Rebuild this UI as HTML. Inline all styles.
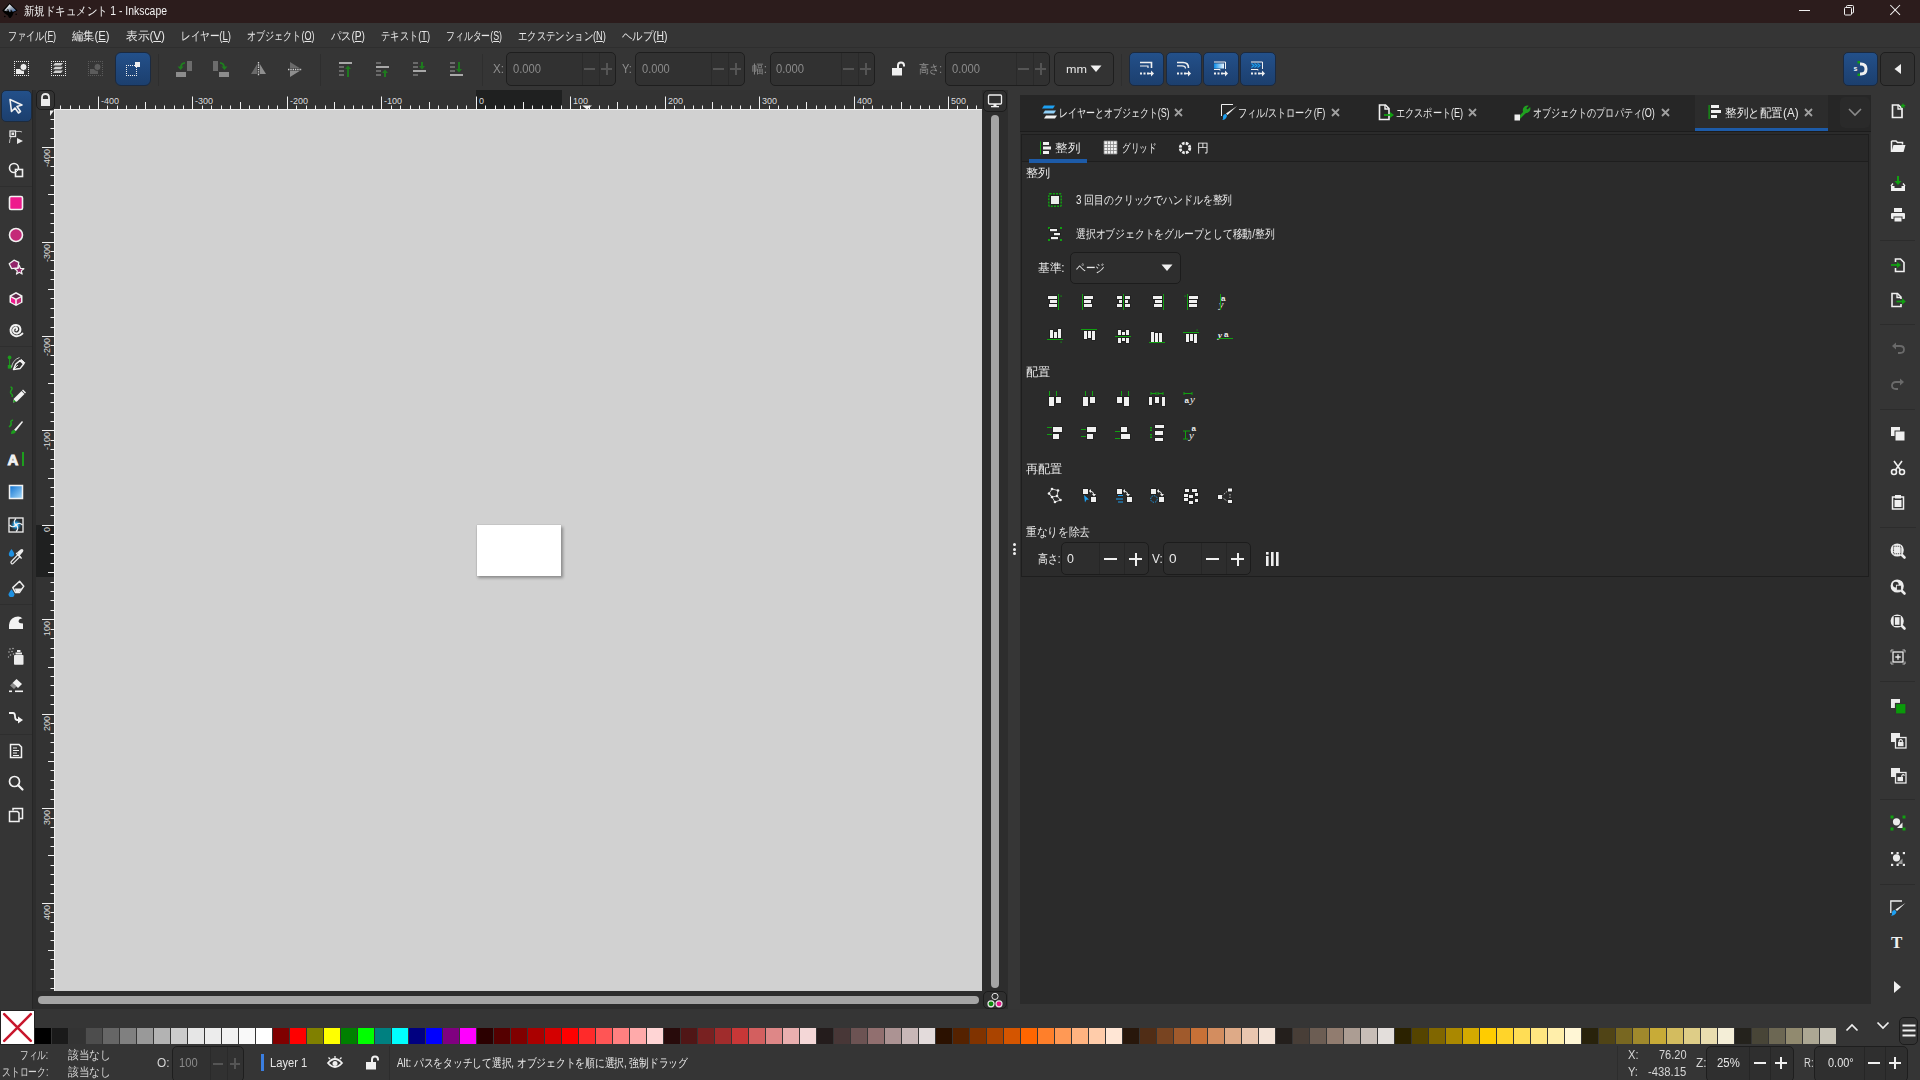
<!DOCTYPE html>
<html><head><meta charset="utf-8">
<style>
*{box-sizing:border-box}
html,body{margin:0;padding:0;width:1920px;height:1080px;overflow:hidden;background:#353535;font-family:"Liberation Sans",sans-serif;font-size:12px;color:#e6e6e6}
.a{position:absolute}
.t{position:absolute;white-space:nowrap;line-height:14px;z-index:2}
svg{position:absolute;overflow:visible;z-index:2}
.inp{position:absolute;border:1px solid #1e1e1e;border-radius:5px;background:#313131}
.inp .d{position:absolute;top:0;bottom:0;width:1px;background:#2a2a2a}
.bb{position:absolute;border:1px solid #1b2a40;border-radius:5px;background:linear-gradient(#23508a,#1c3f6e)}
</style></head><body>

<!-- title bar -->
<div class="a" style="left:0;top:0;width:1920px;height:23px;background:#2c1c1c"></div>
<div class="t" style="left:23.5px;top:4px;font-size:12px;color:#f2f2f2;transform:scaleX(1.014);transform-origin:0 0;--tw:143.00">新規ドキュメント 1 - Inkscape</div>

<!-- menubar -->
<div class="a" style="left:0;top:23px;width:1920px;height:24px;background:#353535"></div>
<div class="a" style="left:0;top:47px;width:1920px;height:1px;background:#2e2e2e"></div>

<!-- toolbar -->
<div class="a" style="left:0;top:48px;width:1920px;height:42px;background:#353535"></div>

<!-- title icon -->
<svg style="left:0px;top:0px" width="24" height="23" viewBox="0 0 24 23"><defs><linearGradient id="lg0" x1="0" y1="0" x2="1" y2="1"><stop offset="0.2" stop-color="#ffffff"/><stop offset="0.55" stop-color="#9aa6b8"/><stop offset="1" stop-color="#2d5a9a"/></linearGradient></defs><path d="M2.2 10.6 L9.6 3 L17.6 10.6 L13.5 12.8 L12.5 15.5 L10.5 18 L9 17.8 L7.8 15.5 L4.5 13.2 Z" fill="#000"/><path d="M4.2 10.4 L9.6 4.3 L16.2 10.6 L13 11.8 L11.2 10.8 L9.8 12.2 L8.5 10.2 L7 11.2 Z" fill="url(#lg0)"/><path d="M6 10.5 L8 9 L9 10.5 Z M10 10.5 L11 9.5 L12.5 11 Z" fill="#111"/><circle cx="4.8" cy="16.5" r="0.8" fill="#000"/><circle cx="16.2" cy="14.3" r="0.8" fill="#000"/></svg>
<!-- window controls -->
<div class="a" style="left:1799px;top:10px;width:11px;height:1px;background:#f0f0f0"></div>
<svg style="left:1843px;top:4px" width="12" height="12" viewBox="0 0 12 12"><rect x="1.5" y="3.5" width="7" height="7.5" rx="1" fill="none" stroke="#f0f0f0" stroke-width="1"/><path d="M3.5 3 V2.5 Q3.5 1.5 4.5 1.5 H9.5 Q10.5 1.5 10.5 2.5 V8.5 Q10.5 9 9 9" fill="none" stroke="#f0f0f0" stroke-width="1"/></svg>
<svg style="left:1889px;top:4px" width="12" height="12" viewBox="0 0 12 12"><path d="M1.3 1 L11 10.8 M11 1 L1.3 10.8" stroke="#f0f0f0" stroke-width="1.05"/></svg>
<!-- menu -->
<div class="t" style="left:7.5px;top:29px;color:#e8e8e8;transform:scaleX(0.941);transform-origin:0 0;--tw:48.00">ファイル(<u>F</u>)</div>
<div class="t" style="left:72.0px;top:29px;color:#e8e8e8;transform:scaleX(1.103);transform-origin:0 0;--tw:37.50">編集(<u>E</u>)</div>
<div class="t" style="left:125.5px;top:29px;color:#e8e8e8;transform:scaleX(1.147);transform-origin:0 0;--tw:39.00">表示(<u>V</u>)</div>
<div class="t" style="left:180.5px;top:29px;color:#e8e8e8;transform:scaleX(0.980);transform-origin:0 0;--tw:50.00">レイヤー(<u>L</u>)</div>
<div class="t" style="left:247.0px;top:29px;color:#e8e8e8;transform:scaleX(0.951);transform-origin:0 0;--tw:67.50">オブジェクト(<u>O</u>)</div>
<div class="t" style="left:330.5px;top:29px;color:#e8e8e8;transform:scaleX(1.000);transform-origin:0 0;--tw:34.00">パス(<u>P</u>)</div>
<div class="t" style="left:380.5px;top:29px;color:#e8e8e8;transform:scaleX(0.961);transform-origin:0 0;--tw:49.00">テキスト(<u>T</u>)</div>
<div class="t" style="left:445.5px;top:29px;color:#e8e8e8;transform:scaleX(0.918);transform-origin:0 0;--tw:56.00">フィルター(<u>S</u>)</div>
<div class="t" style="left:517.5px;top:29px;color:#e8e8e8;transform:scaleX(0.989);transform-origin:0 0;--tw:88.00">エクステンション(<u>N</u>)</div>
<div class="t" style="left:622.0px;top:29px;color:#e8e8e8;transform:scaleX(1.034);transform-origin:0 0;--tw:45.50">ヘルプ(<u>H</u>)</div>


<!-- toolbar icons -->
<svg style="left:10px;top:58px" width="100" height="22" viewBox="10 58 100 22"><g fill="#ececec"><rect x="14" y="61" width="1" height="1"/><rect x="14" y="75" width="1" height="1"/><rect x="14" y="61" width="1" height="1"/><rect x="28" y="61" width="1" height="1"/><rect x="16" y="61" width="1" height="1"/><rect x="16" y="75" width="1" height="1"/><rect x="14" y="63" width="1" height="1"/><rect x="28" y="63" width="1" height="1"/><rect x="18" y="61" width="1" height="1"/><rect x="18" y="75" width="1" height="1"/><rect x="14" y="65" width="1" height="1"/><rect x="28" y="65" width="1" height="1"/><rect x="20" y="61" width="1" height="1"/><rect x="20" y="75" width="1" height="1"/><rect x="14" y="67" width="1" height="1"/><rect x="28" y="67" width="1" height="1"/><rect x="22" y="61" width="1" height="1"/><rect x="22" y="75" width="1" height="1"/><rect x="14" y="69" width="1" height="1"/><rect x="28" y="69" width="1" height="1"/><rect x="24" y="61" width="1" height="1"/><rect x="24" y="75" width="1" height="1"/><rect x="14" y="71" width="1" height="1"/><rect x="28" y="71" width="1" height="1"/><rect x="26" y="61" width="1" height="1"/><rect x="26" y="75" width="1" height="1"/><rect x="14" y="73" width="1" height="1"/><rect x="28" y="73" width="1" height="1"/><rect x="28" y="61" width="1" height="1"/><rect x="28" y="75" width="1" height="1"/><rect x="14" y="75" width="1" height="1"/><rect x="28" y="75" width="1" height="1"/></g><rect x="16" y="69" width="8" height="5" fill="#ececec"/><circle cx="23.5" cy="67" r="3.6" fill="#ececec" stroke="#353535" stroke-width="1"/><g fill="#ececec"><rect x="51" y="61" width="1" height="1"/><rect x="51" y="75" width="1" height="1"/><rect x="51" y="61" width="1" height="1"/><rect x="65" y="61" width="1" height="1"/><rect x="53" y="61" width="1" height="1"/><rect x="53" y="75" width="1" height="1"/><rect x="51" y="63" width="1" height="1"/><rect x="65" y="63" width="1" height="1"/><rect x="55" y="61" width="1" height="1"/><rect x="55" y="75" width="1" height="1"/><rect x="51" y="65" width="1" height="1"/><rect x="65" y="65" width="1" height="1"/><rect x="57" y="61" width="1" height="1"/><rect x="57" y="75" width="1" height="1"/><rect x="51" y="67" width="1" height="1"/><rect x="65" y="67" width="1" height="1"/><rect x="59" y="61" width="1" height="1"/><rect x="59" y="75" width="1" height="1"/><rect x="51" y="69" width="1" height="1"/><rect x="65" y="69" width="1" height="1"/><rect x="61" y="61" width="1" height="1"/><rect x="61" y="75" width="1" height="1"/><rect x="51" y="71" width="1" height="1"/><rect x="65" y="71" width="1" height="1"/><rect x="63" y="61" width="1" height="1"/><rect x="63" y="75" width="1" height="1"/><rect x="51" y="73" width="1" height="1"/><rect x="65" y="73" width="1" height="1"/><rect x="65" y="61" width="1" height="1"/><rect x="65" y="75" width="1" height="1"/><rect x="51" y="75" width="1" height="1"/><rect x="65" y="75" width="1" height="1"/></g><path d="M55 63 H63 L61 65.5 H53 Z M55 66.8 H63 L61 69.3 H53 Z M55 70.6 H63 L61 73.1 H53 Z" fill="#cfcfcf"/><g fill="#5a5a5a"><rect x="88" y="61" width="1" height="1"/><rect x="88" y="75" width="1" height="1"/><rect x="88" y="61" width="1" height="1"/><rect x="102" y="61" width="1" height="1"/><rect x="90" y="61" width="1" height="1"/><rect x="90" y="75" width="1" height="1"/><rect x="88" y="63" width="1" height="1"/><rect x="102" y="63" width="1" height="1"/><rect x="92" y="61" width="1" height="1"/><rect x="92" y="75" width="1" height="1"/><rect x="88" y="65" width="1" height="1"/><rect x="102" y="65" width="1" height="1"/><rect x="94" y="61" width="1" height="1"/><rect x="94" y="75" width="1" height="1"/><rect x="88" y="67" width="1" height="1"/><rect x="102" y="67" width="1" height="1"/><rect x="96" y="61" width="1" height="1"/><rect x="96" y="75" width="1" height="1"/><rect x="88" y="69" width="1" height="1"/><rect x="102" y="69" width="1" height="1"/><rect x="98" y="61" width="1" height="1"/><rect x="98" y="75" width="1" height="1"/><rect x="88" y="71" width="1" height="1"/><rect x="102" y="71" width="1" height="1"/><rect x="100" y="61" width="1" height="1"/><rect x="100" y="75" width="1" height="1"/><rect x="88" y="73" width="1" height="1"/><rect x="102" y="73" width="1" height="1"/><rect x="102" y="61" width="1" height="1"/><rect x="102" y="75" width="1" height="1"/><rect x="88" y="75" width="1" height="1"/><rect x="102" y="75" width="1" height="1"/></g><rect x="90" y="69" width="8" height="5" fill="#5c5c5c"/><circle cx="97.5" cy="67" r="3.6" fill="#5c5c5c" stroke="#353535" stroke-width="1"/></svg>
<div class="bb" style="left:115px;top:52px;width:36px;height:34px;border-radius:6px"></div>
<svg style="left:120px;top:58px" width="26" height="22" viewBox="120 58 26 22"><g fill="#f0f0f0"><rect x="126" y="65" width="1" height="1"/><rect x="126" y="75" width="1" height="1"/><rect x="128" y="65" width="1" height="1"/><rect x="128" y="75" width="1" height="1"/><rect x="130" y="65" width="1" height="1"/><rect x="130" y="75" width="1" height="1"/><rect x="132" y="65" width="1" height="1"/><rect x="132" y="75" width="1" height="1"/><rect x="134" y="65" width="1" height="1"/><rect x="134" y="75" width="1" height="1"/><rect x="136" y="75" width="1" height="1"/><rect x="126" y="65" width="1" height="1"/><rect x="136" y="65" width="1" height="1"/><rect x="126" y="67" width="1" height="1"/><rect x="136" y="67" width="1" height="1"/><rect x="126" y="69" width="1" height="1"/><rect x="136" y="69" width="1" height="1"/><rect x="126" y="71" width="1" height="1"/><rect x="136" y="71" width="1" height="1"/><rect x="126" y="73" width="1" height="1"/><rect x="136" y="73" width="1" height="1"/><rect x="126" y="75" width="1" height="1"/><rect x="136" y="75" width="1" height="1"/></g><rect x="135" y="62" width="5" height="5" fill="#f0f0f0"/></svg>
<div class="a" style="left:158px;top:54px;width:1px;height:32px;background:#2e2e2e"></div>
<svg style="left:170px;top:56px" width="140" height="26" viewBox="170 56 140 26"><rect x="187" y="61" width="5" height="10" fill="#6c6c6c"/><rect x="176" y="72" width="10" height="5" fill="#8c8c8c"/><path d="M185 62.8 Q181.5 63 180.8 67" fill="none" stroke="#1e7e1e" stroke-width="1.8"/><path d="M177.6 66.6 L180.6 70 L183.6 66.6 Z" fill="#1e7e1e"/><rect x="213" y="61" width="5" height="10" fill="#6c6c6c"/><rect x="219" y="72" width="10" height="5" fill="#8c8c8c"/><path d="M220 62.8 Q223.5 63 224.2 67" fill="none" stroke="#1e7e1e" stroke-width="1.8"/><path d="M221.4 66.6 L224.4 70 L227.4 66.6 Z" fill="#1e7e1e"/><path d="M257.2 64 L257.2 74 L251 74 Z" fill="#6a6a6a"/><path d="M259.8 64 L259.8 74 L266 74 Z" fill="#8e8e8e"/><path d="M258.5 62 V76" stroke="#d0d0d0" stroke-width="1.3" stroke-dasharray="1.4 0.9"/><path d="M290 62 L300 68.2 L290 68.2 Z" fill="#6a6a6a"/><path d="M290 70.8 L300 70.8 L290 77 Z" fill="#8e8e8e"/><path d="M288 69.5 H302" stroke="#d0d0d0" stroke-width="1.3" stroke-dasharray="1.4 0.9"/></svg>
<div class="a" style="left:320px;top:54px;width:1px;height:32px;background:#2e2e2e"></div>
<svg style="left:338px;top:61px" width="17" height="17" viewBox="0 0 17 17"><rect x="1" y="1" width="13" height="2" fill="#a8a8a8"/><rect x="1" y="5" width="5" height="2" fill="#6a6a6a"/><rect x="1" y="9" width="5" height="2" fill="#6a6a6a"/><rect x="1" y="13" width="5" height="2" fill="#6a6a6a"/><path d="M10 16 V7" stroke="#1e7a1e" stroke-width="2"/><path d="M7 8 L10 4.5 L13 8 Z" fill="#1e7a1e"/></svg>
<svg style="left:375px;top:61px" width="17" height="17" viewBox="0 0 17 17"><rect x="1" y="1" width="5" height="2" fill="#6a6a6a"/><rect x="1" y="5" width="13" height="2" fill="#a8a8a8"/><rect x="1" y="9" width="5" height="2" fill="#6a6a6a"/><rect x="1" y="13" width="5" height="2" fill="#6a6a6a"/><path d="M10 16 V11" stroke="#1e7a1e" stroke-width="2"/><path d="M7 12 L10 8.5 L13 12 Z" fill="#1e7a1e"/></svg>
<svg style="left:412px;top:61px" width="17" height="17" viewBox="0 0 17 17"><rect x="1" y="1" width="5" height="2" fill="#6a6a6a"/><rect x="1" y="5" width="5" height="2" fill="#6a6a6a"/><rect x="1" y="9" width="13" height="2" fill="#a8a8a8"/><rect x="1" y="13" width="5" height="2" fill="#6a6a6a"/><path d="M10 1 V6" stroke="#1e7a1e" stroke-width="2"/><path d="M7 5 L10 8.5 L13 5 Z" fill="#1e7a1e"/></svg>
<svg style="left:449px;top:61px" width="17" height="17" viewBox="0 0 17 17"><rect x="1" y="1" width="5" height="2" fill="#6a6a6a"/><rect x="1" y="5" width="5" height="2" fill="#6a6a6a"/><rect x="1" y="9" width="5" height="2" fill="#6a6a6a"/><rect x="1" y="13" width="13" height="2" fill="#a8a8a8"/><path d="M10 1 V9" stroke="#1e7a1e" stroke-width="2"/><path d="M7 8 L10 11.5 L13 8 Z" fill="#1e7a1e"/></svg>
<div class="a" style="left:482px;top:54px;width:1px;height:32px;background:#2e2e2e"></div>
<!-- coordinate inputs -->
<div class="t" style="left:492.5px;top:62px;color:#8f8f8f;transform:scaleX(1.000);transform-origin:0 0;--tw:11.00">X:</div>
<div class="inp" style="left:506px;top:52px;width:110px;height:34px"><div class="d" style="left:75px"></div><div class="d" style="left:92px"></div></div>
<div class="t" style="left:512.5px;top:62px;color:#8a8a8a;transform:scaleX(0.903);transform-origin:0 0;--tw:28.00">0.000</div>
<div class="t" style="left:622.2px;top:62px;color:#8f8f8f;transform:scaleX(0.980);transform-origin:0 0;--tw:9.80">Y:</div>
<div class="inp" style="left:635px;top:52px;width:110px;height:34px"><div class="d" style="left:75px"></div><div class="d" style="left:92px"></div></div>
<div class="t" style="left:642.0px;top:62px;color:#8a8a8a;transform:scaleX(0.894);transform-origin:0 0;--tw:27.70">0.000</div>
<div class="t" style="left:752.0px;top:62px;color:#8f8f8f;transform:scaleX(1.250);transform-origin:0 0;--tw:15.00">幅:</div>
<div class="inp" style="left:770px;top:52px;width:105px;height:34px"><div class="d" style="left:70px"></div><div class="d" style="left:87px"></div></div>
<div class="t" style="left:776.4px;top:62px;color:#8a8a8a;transform:scaleX(0.906);transform-origin:0 0;--tw:28.10">0.000</div>
<svg style="left:891px;top:61px" width="15" height="15" viewBox="0 0 15 15"><path d="M7 7 V4.5 Q7 1.5 10 1.5 Q13 1.5 13 4.5 V5.5" fill="none" stroke="#f0f0f0" stroke-width="2"/><rect x="1" y="7" width="10" height="7.5" fill="#f0f0f0"/></svg>
<div class="t" style="left:918.5px;top:62px;color:#8f8f8f;transform:scaleX(1.095);transform-origin:0 0;--tw:23.00">高さ:</div>
<div class="inp" style="left:945px;top:52px;width:105px;height:34px"><div class="d" style="left:70px"></div><div class="d" style="left:87px"></div></div>
<div class="t" style="left:951.5px;top:62px;color:#8a8a8a;transform:scaleX(0.903);transform-origin:0 0;--tw:28.00">0.000</div>
<div class="inp" style="left:1054px;top:52px;width:60px;height:34px;background:#333"></div>
<div class="t" style="left:1065.5px;top:62px;color:#e6e6e6;font-size:11px;transform:scaleX(1.167);transform-origin:0 0;--tw:21.00">mm</div>
<svg style="left:1090px;top:65px" width="12" height="8" viewBox="0 0 12 8"><path d="M0.5 0.5 H11.5 L6 7 Z" fill="#f0f0f0"/></svg>
<div class="a" style="left:1121px;top:54px;width:1px;height:32px;background:#2e2e2e"></div>
<div class="bb" style="left:1129px;top:52px;width:35px;height:34px"></div>
<div class="bb" style="left:1166px;top:52px;width:36px;height:34px"></div>
<div class="bb" style="left:1203px;top:52px;width:36px;height:34px"></div>
<div class="bb" style="left:1240px;top:52px;width:36px;height:34px"></div>
<div class="bb" style="left:1843px;top:52px;width:35px;height:34px"></div>
<svg style="left:1139px;top:61px" width="16" height="16" viewBox="0 0 16 16"><path d="M1 1.5 H12.5 V7" fill="none" stroke="#f0f0f0" stroke-width="1.6"/><path d="M1 5 H9 V7" fill="none" stroke="#f0f0f0" stroke-width="1.2"/><rect x="1" y="11.5" width="2" height="2" fill="#f0f0f0"/><rect x="4.5" y="11.5" width="2" height="2" fill="#f0f0f0"/><rect x="8" y="11.5" width="2" height="2" fill="#f0f0f0"/><path d="M10 12.5 H13" stroke="#f0f0f0" stroke-width="1.5"/><path d="M12 9.5 L15 12.5 L12 15.5 Z" fill="#f0f0f0"/></svg>
<svg style="left:1176px;top:61px" width="16" height="16" viewBox="0 0 16 16"><path d="M1 1.5 H7 Q12.5 1.5 12.5 7" fill="none" stroke="#f0f0f0" stroke-width="1.6"/><path d="M1 4.8 H6 Q9.5 4.8 9.5 7.5" fill="none" stroke="#f0f0f0" stroke-width="1.2"/><rect x="1" y="11.5" width="2" height="2" fill="#f0f0f0"/><rect x="4.5" y="11.5" width="2" height="2" fill="#f0f0f0"/><rect x="8" y="11.5" width="2" height="2" fill="#f0f0f0"/><path d="M10 12.5 H13" stroke="#f0f0f0" stroke-width="1.5"/><path d="M12 9.5 L15 12.5 L12 15.5 Z" fill="#f0f0f0"/></svg>
<svg style="left:1213px;top:61px" width="16" height="16" viewBox="0 0 16 16"><defs><linearGradient id="bg3"><stop offset="0" stop-color="#0a8ee8"/><stop offset="1" stop-color="#e8f4ff"/></linearGradient></defs><path d="M1 1 H12.5 V8" fill="none" stroke="#f0f0f0" stroke-width="1"/><rect x="1" y="2.5" width="10" height="5" fill="url(#bg3)"/><path d="M1 8.5 H7 V9.5" fill="none" stroke="#f0f0f0" stroke-width="1"/><rect x="1" y="11.5" width="2" height="2" fill="#f0f0f0"/><rect x="4.5" y="11.5" width="2" height="2" fill="#f0f0f0"/><rect x="8" y="11.5" width="2" height="2" fill="#f0f0f0"/><path d="M10 12.5 H13" stroke="#f0f0f0" stroke-width="1.5"/><path d="M12 9.5 L15 12.5 L12 15.5 Z" fill="#f0f0f0"/></svg>
<svg style="left:1250px;top:61px" width="16" height="16" viewBox="0 0 16 16"><path d="M1 1 H12.5 V8" fill="none" stroke="#f0f0f0" stroke-width="1"/><path d="M1.5 2.5 L4 4.5 L1.5 6.5 M4.5 2.5 L7 4.5 L4.5 6.5 M7.5 2.5 L10 4.5 L7.5 6.5" fill="none" stroke="#1da0f2" stroke-width="1.1"/><path d="M1 8.5 H8 V9.5" fill="none" stroke="#f0f0f0" stroke-width="1"/><rect x="1" y="11.5" width="2" height="2" fill="#f0f0f0"/><rect x="4.5" y="11.5" width="2" height="2" fill="#f0f0f0"/><rect x="8" y="11.5" width="2" height="2" fill="#f0f0f0"/><path d="M10 12.5 H13" stroke="#f0f0f0" stroke-width="1.5"/><path d="M12 9.5 L15 12.5 L12 15.5 Z" fill="#f0f0f0"/></svg>
<svg style="left:1852px;top:60px" width="17" height="17" viewBox="0 0 17 17"><path d="M9 2.5 Q15.5 2.5 15.5 9 Q15.5 15.5 9 15.5 L8 15.5 V12.5 H9 Q12.5 12.5 12.5 9 Q12.5 5.5 9 5.5 H8 V2.5 Z" fill="#f0f0f0"/><rect x="5.5" y="1" width="2.5" height="2.5" fill="#11a011"/><rect x="5.5" y="13.5" width="2.5" height="2.5" fill="#11a011"/><text x="1.5" y="11" font-family="Liberation Sans" font-weight="bold" font-size="7" fill="#f0f0f0">s</text></svg>
<div class="inp" style="left:1880px;top:52px;width:35px;height:34px;background:#323232"></div>
<svg style="left:1891px;top:62px" width="14" height="14" viewBox="0 0 14 14"><path d="M10 2 V12 L3.5 7 Z" fill="#f0f0f0"/></svg>
<div class="a" style="left:584px;top:68px;width:11px;height:2px;background:#555"></div><div class="a" style="left:601px;top:68px;width:11px;height:2px;background:#555"></div><div class="a" style="left:606px;top:63px;width:2px;height:12px;background:#555"></div>
<div class="a" style="left:713px;top:68px;width:11px;height:2px;background:#555"></div><div class="a" style="left:730px;top:68px;width:11px;height:2px;background:#555"></div><div class="a" style="left:735px;top:63px;width:2px;height:12px;background:#555"></div>
<div class="a" style="left:843px;top:68px;width:11px;height:2px;background:#555"></div><div class="a" style="left:860px;top:68px;width:11px;height:2px;background:#555"></div><div class="a" style="left:865px;top:63px;width:2px;height:12px;background:#555"></div>
<div class="a" style="left:1018px;top:68px;width:11px;height:2px;background:#555"></div><div class="a" style="left:1035px;top:68px;width:11px;height:2px;background:#555"></div><div class="a" style="left:1040px;top:63px;width:2px;height:12px;background:#555"></div>

<!-- left toolbox -->
<div class="a" style="left:0;top:90px;width:32px;height:919px;background:#353535"></div>
<div class="a" style="left:32px;top:90px;width:1px;height:919px;background:#262626"></div>
<div class="a" style="left:33px;top:90px;width:3px;height:919px;background:#2d2d2d"></div>


<!-- toolbox buttons -->
<div class="bb" style="left:1px;top:90px;width:31px;height:32px;border-color:#1d2b3d"></div>
<svg style="left:8px;top:98px" width="16" height="16" viewBox="0 0 16 16"><path d="M2 1.5 L14 7 L9 8.5 L12.5 13.5 L10.5 15 L7 10 L3.5 13.5 Z" fill="none" stroke="#f0f0f0" stroke-width="1.6" stroke-linejoin="round"/></svg>
<svg style="left:8px;top:129px" width="16" height="16" viewBox="0 0 16 16"><rect x="2" y="2" width="5.5" height="5.5" fill="none" stroke="#e6e6e6" stroke-width="1.3"/><rect x="3.5" y="3.5" width="2.5" height="2.5" fill="#e6e6e6"/><path d="M8 2.5 Q13 2 14 3" fill="none" stroke="#bbb" stroke-width="1"/><path d="M1.5 14 Q1.5 10 3 8" fill="none" stroke="#bbb" stroke-width="1"/><path d="M9 9 L15 12 L9 15 Z" fill="#e6e6e6"/></svg>
<svg style="left:8px;top:162px" width="16" height="16" viewBox="0 0 16 16"><circle cx="6" cy="6" r="4.5" fill="none" stroke="#f0f0f0" stroke-width="1.6"/><rect x="7.5" y="7.5" width="7" height="7" fill="#353535" stroke="#f0f0f0" stroke-width="1.6"/><path d="M7.5 10.5 L10.5 7.5" stroke="#f0f0f0" stroke-width="1"/></svg>
<div class="a" style="left:0;top:186px;width:32px;height:1px;background:#2e2e2e"></div>
<svg style="left:8px;top:195px" width="16" height="16" viewBox="0 0 16 16"><rect x="1.5" y="1.5" width="13" height="13" rx="1.5" fill="#ee1a8c" stroke="#f2f2f2" stroke-width="1.6"/></svg>
<svg style="left:8px;top:227px" width="16" height="16" viewBox="0 0 16 16"><circle cx="8" cy="8" r="6.5" fill="#c42a78" stroke="#f2f2f2" stroke-width="1.6"/></svg>
<svg style="left:8px;top:259px" width="17" height="17" viewBox="0 0 17 17"><path d="M1.2 4.8 L6 1.2 L10.8 3.4 L9.8 8.8 L3.6 9.6 Z" fill="#93246a" stroke="#f2f2f2" stroke-width="1.3" stroke-linejoin="round"/><path d="M11.30 6.40 L12.53 9.50 L15.87 9.72 L13.30 11.85 L14.12 15.08 L11.30 13.30 L8.48 15.08 L9.30 11.85 L6.73 9.72 L10.07 9.50 Z" fill="#93246a" stroke="#f2f2f2" stroke-width="1.2" stroke-linejoin="round"/></svg>
<svg style="left:8px;top:291px" width="16" height="16" viewBox="0 0 16 16"><path d="M8 1 L14.5 4.5 V11.5 L8 15 L1.5 11.5 V4.5 Z" fill="#f2f2f2"/><path d="M8 2.8 L12.5 5.2 L8 7.6 L3.5 5.2 Z" fill="#5d2a4a"/><path d="M3 6.5 L7.2 8.8 V13.2 L3 11 Z" fill="#ee1a8c"/><path d="M8.8 8.8 L13 6.5 V11 L8.8 13.2 Z" fill="#c42a78"/></svg>
<svg style="left:8px;top:322px" width="16" height="16" viewBox="0 0 16 16"><path d="M8.3 8.3 Q9.6 7.6 9 6.4 Q8 5 6.3 6 Q4.6 7.4 5.4 9.6 Q6.6 12 9.6 11.4 Q12.6 10.4 12.4 7 Q11.8 3.2 8 3 Q3.6 3 2.6 7.4 Q2.2 12.6 7.2 14 Q11.6 14.8 14.4 11.6" fill="none" stroke="#f2f2f2" stroke-width="2" stroke-linecap="round"/></svg>
<div class="a" style="left:0;top:346px;width:32px;height:1px;background:#2e2e2e"></div>
<svg style="left:6px;top:352px" width="20" height="20" viewBox="0 0 20 20"><circle cx="3.6" cy="5.4" r="1.9" fill="#1d9e1d"/><path d="M3.6 6 V13" stroke="#1d9e1d" stroke-width="1"/><rect x="1.8" y="13" width="3.6" height="3.6" fill="#1d9e1d"/><path d="M5.5 15.5 Q6.5 8 13.5 5.5" fill="none" stroke="#cfcfcf" stroke-width="0.9"/><path d="M7.5 17.5 L9.8 12 L14 8.6 L17.6 12 L14.2 16.4 Z" fill="#2f2f2f" stroke="#f2f2f2" stroke-width="1.5" stroke-linejoin="round"/><path d="M7.8 17.2 L11.8 13" stroke="#f2f2f2" stroke-width="1"/><path d="M14 8.6 L15.2 7.4 L18.8 10.8 L17.6 12" fill="#f2f2f2" stroke="#f2f2f2" stroke-width="1"/></svg>
<svg style="left:7px;top:385px" width="19" height="19" viewBox="0 0 19 19"><path d="M3.5 2 Q6 2.5 4.5 5 Q2.5 7.5 4.5 9 Q6 10 5 12" fill="none" stroke="#1d9e1d" stroke-width="1.5"/><path d="M6 17.5 L7 13.5 L14.5 6 L17.5 9 L10 16.5 Z" fill="#f2f2f2"/><path d="M15 5.5 L16 4.5 L19 7.5 L18 8.5 Z" fill="#f2f2f2"/><path d="M6 17.5 L6.8 14.4 L9.1 16.7 Z" fill="#1d9e1d"/></svg>
<svg style="left:8px;top:419px" width="16" height="16" viewBox="0 0 16 16"><path d="M1 8 Q4 6 3 3.5 Q2 2 5 1" fill="none" stroke="#1d9e1d" stroke-width="1.5"/><path d="M6 11 L14 2 L15 3 L8 12 Z" fill="#f2f2f2"/><path d="M3 15 Q3 11 6 11 L8 12.5 Q7 15 3 15 Z" fill="#1d9e1d"/></svg>
<svg style="left:7px;top:451px" width="16" height="16" viewBox="0 0 16 16"><text x="0.5" y="14" font-family="Liberation Sans" font-weight="bold" font-size="15" fill="#f2f2f2" stroke="#f2f2f2" stroke-width="0.9">A</text></svg>
<div class="a" style="left:22px;top:452px;width:2px;height:14px;background:#1d9e1d"></div>
<svg style="left:8px;top:484px" width="16" height="16" viewBox="0 0 16 16"><defs><linearGradient id="gr1" x1="0" y1="0" x2="1" y2="1"><stop offset="0" stop-color="#0b6fd0"/><stop offset="1" stop-color="#a9dcfb"/></linearGradient></defs><rect x="1.5" y="1.5" width="13" height="13" fill="url(#gr1)" stroke="#f2f2f2" stroke-width="1.5"/></svg>
<svg style="left:8px;top:517px" width="16" height="16" viewBox="0 0 16 16"><defs><radialGradient id="mg"><stop offset="0" stop-color="#ffffff"/><stop offset="0.35" stop-color="#2aa8f0"/><stop offset="1" stop-color="#1a2a3a" stop-opacity="0"/></radialGradient></defs><rect x="1" y="1" width="14" height="14" fill="#2a2a2a" stroke="#f2f2f2" stroke-width="1.3"/><circle cx="8" cy="8" r="6.5" fill="url(#mg)"/><path d="M8 1.5 Q4.5 5 8 8 Q11.5 11 8 14.5 M1.5 8 Q5 11.5 8 8 Q11 4.5 14.5 8" fill="none" stroke="#f2f2f2" stroke-width="1.2"/></svg>
<svg style="left:4px;top:547px" width="24" height="20" viewBox="4 547 24 20"><path d="M11.5 549 Q8.8 552.6 8.8 554 A2.7 2.7 0 0 0 14.2 554 Q14.2 552.6 11.5 549 Z" fill="#1e90e0"/><path d="M11.5 563.5 Q10.5 562.5 11.2 561.6 L18 554.6 L20 556.6 L13.2 563.4 Q12.4 564.3 11.5 563.5 Z" fill="none" stroke="#ececec" stroke-width="1.3"/><path d="M17 552.6 L20.5 549.6 Q22 548.6 23 549.6 Q24 550.8 22.8 552 L19.8 555.4 Z" fill="#ececec"/><path d="M16.2 553 L21.6 558.4" stroke="#ececec" stroke-width="1.4"/></svg>
<svg style="left:4px;top:578px" width="24" height="22" viewBox="4 578 24 22"><path d="M11.5 589.2 Q8.6 593 8.6 594.2 A2.9 2.9 0 0 0 14.4 594.2 Q14.4 593 11.5 589.2 Z" fill="#1e90e0"/><path d="M12.8 587.6 L19.6 581.2 L23.8 586.2 L19.4 592.6 L15.6 592.6 Z" fill="none" stroke="#ececec" stroke-width="1.5" stroke-linejoin="round"/><path d="M14.8 588.4 L22.4 588.4 L19 592 L16 592 Z" fill="#ececec"/></svg>
<div class="a" style="left:0;top:604px;width:32px;height:1px;background:#2e2e2e"></div>
<svg style="left:8px;top:614px" width="16" height="16" viewBox="0 0 16 16"><path d="M1 15 V11 Q1.5 5 7 3 Q12 1.5 14.5 4.5 Q11 4 10.5 7 Q10.5 9.5 15 9.5 V15 Z" fill="#f2f2f2"/></svg>
<svg style="left:4px;top:643px" width="24" height="24" viewBox="4 643 24 24"><rect x="14" y="655" width="9.5" height="9.8" rx="0.8" fill="#ececec"/><rect x="15.5" y="652.5" width="6.5" height="2" fill="#ececec"/><rect x="17" y="650" width="3.5" height="2" fill="#ececec"/><g fill="#b0b0b0"><circle cx="10" cy="649" r="0.8"/><circle cx="13" cy="648.5" r="0.8"/><circle cx="9" cy="652" r="0.8"/><circle cx="12" cy="651.5" r="0.8"/><circle cx="10.5" cy="655" r="0.8"/><circle cx="13.5" cy="654" r="0.8"/><circle cx="8.5" cy="657" r="0.7"/></g></svg>
<svg style="left:8px;top:677px" width="16" height="16" viewBox="0 0 16 16"><path d="M8.5 2 L14 7 L10 11 L4.5 6 Z" fill="#f2f2f2"/><path d="M4.5 6 L2 8.5 L6 12 L8.5 9.6 Z" fill="#8a8a8a"/><rect x="1" y="13.5" width="3" height="1.6" fill="#f2f2f2"/><rect x="7" y="13.5" width="8" height="1.6" fill="#f2f2f2"/></svg>
<svg style="left:8px;top:710px" width="16" height="16" viewBox="0 0 16 16"><path d="M1 3 L5 3 Q7 3 7 6 Q7 10 9 10 L11 10" fill="none" stroke="#f2f2f2" stroke-width="1.8"/><path d="M10 6.5 L15 10 L10 13.5 Z" fill="#f2f2f2"/></svg>
<div class="a" style="left:0;top:734px;width:32px;height:1px;background:#2e2e2e"></div>
<svg style="left:8px;top:743px" width="16" height="16" viewBox="0 0 16 16"><path d="M2.5 1.5 H11 L13.5 4 V14.5 H2.5 Z" fill="none" stroke="#f2f2f2" stroke-width="1.5"/><path d="M5 5 H9 M5 7.5 H11 M5 10 H9 M5 12.5 H11" stroke="#f2f2f2" stroke-width="1.2"/></svg>
<svg style="left:8px;top:775px" width="16" height="16" viewBox="0 0 16 16"><circle cx="6.5" cy="6.5" r="5" fill="none" stroke="#f2f2f2" stroke-width="1.7"/><path d="M10.2 10.2 L14.5 14.5" stroke="#f2f2f2" stroke-width="2.2" stroke-linecap="round"/></svg>
<svg style="left:8px;top:807px" width="16" height="16" viewBox="0 0 16 16"><path d="M5 3.5 V1.5 H14.5 V11.5 H11.5" fill="none" stroke="#f2f2f2" stroke-width="1.5"/><path d="M1.5 4.5 H9.5 L11 6 V14.5 H1.5 Z" fill="none" stroke="#f2f2f2" stroke-width="1.5"/></svg>

<!-- rulers -->
<div class="a" style="left:36px;top:90px;width:946px;height:20px;background:#333333"></div>
<div class="a" style="left:36px;top:110px;width:18px;height:881px;background:#333333"></div>

<!-- canvas -->
<div class="a" style="left:55px;top:110px;width:927px;height:881px;background:#d1d1d1"></div>

<svg style="left:36px;top:90px" width="946" height="20" viewBox="0 0 946 20"><rect x="440.0" y="0" width="86" height="19" fill="#1f2020"/><path d="M24.5 15.5V19M34.5 15.5V19M43.5 15.5V19M53.5 15.5V19M62.5 6.5V19M71.5 15.5V19M81.5 15.5V19M90.5 15.5V19M100.5 15.5V19M109.5 12V19M119.5 15.5V19M128.5 15.5V19M138.5 15.5V19M147.5 15.5V19M156.5 6.5V19M166.5 15.5V19M175.5 15.5V19M185.5 15.5V19M194.5 15.5V19M204.5 12V19M213.5 15.5V19M223.5 15.5V19M232.5 15.5V19M241.5 15.5V19M251.5 6.5V19M260.5 15.5V19M270.5 15.5V19M279.5 15.5V19M289.5 15.5V19M298.5 12V19M308.5 15.5V19M317.5 15.5V19M326.5 15.5V19M336.5 15.5V19M345.5 6.5V19M355.5 15.5V19M364.5 15.5V19M374.5 15.5V19M383.5 15.5V19M393.5 12V19M402.5 15.5V19M411.5 15.5V19M421.5 15.5V19M430.5 15.5V19M440.5 6.5V19M449.5 15.5V19M459.5 15.5V19M468.5 15.5V19M478.5 15.5V19M487.5 12V19M496.5 15.5V19M506.5 15.5V19M515.5 15.5V19M525.5 15.5V19M534.5 6.5V19M544.5 15.5V19M553.5 15.5V19M563.5 15.5V19M572.5 15.5V19M581.5 12V19M591.5 15.5V19M600.5 15.5V19M610.5 15.5V19M619.5 15.5V19M629.5 6.5V19M638.5 15.5V19M648.5 15.5V19M657.5 15.5V19M666.5 15.5V19M676.5 12V19M685.5 15.5V19M695.5 15.5V19M704.5 15.5V19M714.5 15.5V19M723.5 6.5V19M733.5 15.5V19M742.5 15.5V19M751.5 15.5V19M761.5 15.5V19M770.5 12V19M780.5 15.5V19M789.5 15.5V19M799.5 15.5V19M808.5 15.5V19M818.5 6.5V19M827.5 15.5V19M836.5 15.5V19M846.5 15.5V19M855.5 15.5V19M865.5 12V19M874.5 15.5V19M884.5 15.5V19M893.5 15.5V19M903.5 15.5V19M912.5 6.5V19M921.5 15.5V19M931.5 15.5V19M940.5 15.5V19" stroke="#f0f0f0" stroke-width="1"/><rect x="18" y="19" width="928" height="1" fill="#f0f0f0"/><text x="65" y="14" fill="#dcdcdc" font-size="9" font-family="Liberation Sans">-400</text><text x="159" y="14" fill="#dcdcdc" font-size="9" font-family="Liberation Sans">-300</text><text x="254" y="14" fill="#dcdcdc" font-size="9" font-family="Liberation Sans">-200</text><text x="348" y="14" fill="#dcdcdc" font-size="9" font-family="Liberation Sans">-100</text><text x="443" y="14" fill="#dcdcdc" font-size="9" font-family="Liberation Sans">0</text><text x="537" y="14" fill="#dcdcdc" font-size="9" font-family="Liberation Sans">100</text><text x="632" y="14" fill="#dcdcdc" font-size="9" font-family="Liberation Sans">200</text><text x="726" y="14" fill="#dcdcdc" font-size="9" font-family="Liberation Sans">300</text><text x="821" y="14" fill="#dcdcdc" font-size="9" font-family="Liberation Sans">400</text><text x="915" y="14" fill="#dcdcdc" font-size="9" font-family="Liberation Sans">500</text><path d="M546 15.5 L556 15.5 L551 19.5 Z" fill="#f0f0f0"/></svg>
<svg style="left:36px;top:110px" width="19" height="881" viewBox="0 0 19 881"><defs><clipPath id="lc"><rect x="0" y="0" width="19" height="881"/></clipPath></defs><g clip-path="url(#lc)"><rect x="0" y="415" width="18" height="52" fill="#1f2020"/><path d="M14.5 9.5H18M14.5 18.5H18M14.5 28.5H18M6 37.5H18M14.5 47.5H18M14.5 56.5H18M14.5 65.5H18M14.5 75.5H18M12 84.5H18M14.5 94.5H18M14.5 103.5H18M14.5 113.5H18M14.5 122.5H18M6 132.5H18M14.5 141.5H18M14.5 150.5H18M14.5 160.5H18M14.5 169.5H18M12 179.5H18M14.5 188.5H18M14.5 198.5H18M14.5 207.5H18M14.5 217.5H18M6 226.5H18M14.5 235.5H18M14.5 245.5H18M14.5 254.5H18M14.5 264.5H18M12 273.5H18M14.5 283.5H18M14.5 292.5H18M14.5 302.5H18M14.5 311.5H18M6 320.5H18M14.5 330.5H18M14.5 339.5H18M14.5 349.5H18M14.5 358.5H18M12 368.5H18M14.5 377.5H18M14.5 387.5H18M14.5 396.5H18M14.5 405.5H18M6 415.5H18M14.5 424.5H18M14.5 434.5H18M14.5 443.5H18M14.5 453.5H18M12 462.5H18M14.5 472.5H18M14.5 481.5H18M14.5 490.5H18M14.5 500.5H18M6 509.5H18M14.5 519.5H18M14.5 528.5H18M14.5 538.5H18M14.5 547.5H18M12 557.5H18M14.5 566.5H18M14.5 575.5H18M14.5 585.5H18M14.5 594.5H18M6 604.5H18M14.5 613.5H18M14.5 623.5H18M14.5 632.5H18M14.5 642.5H18M12 651.5H18M14.5 660.5H18M14.5 670.5H18M14.5 679.5H18M14.5 689.5H18M6 698.5H18M14.5 708.5H18M14.5 717.5H18M14.5 727.5H18M14.5 736.5H18M12 745.5H18M14.5 755.5H18M14.5 764.5H18M14.5 774.5H18M14.5 783.5H18M6 793.5H18M14.5 802.5H18M14.5 812.5H18M14.5 821.5H18M14.5 830.5H18M12 840.5H18M14.5 849.5H18M14.5 859.5H18M14.5 868.5H18M14.5 878.5H18" stroke="#f0f0f0" stroke-width="1"/><rect x="18" y="0" width="1" height="881" fill="#f0f0f0"/><text transform="translate(13.5 39) rotate(-90)" text-anchor="end" fill="#dcdcdc" font-size="9" font-family="Liberation Sans">-400</text><text transform="translate(13.5 134) rotate(-90)" text-anchor="end" fill="#dcdcdc" font-size="9" font-family="Liberation Sans">-300</text><text transform="translate(13.5 228) rotate(-90)" text-anchor="end" fill="#dcdcdc" font-size="9" font-family="Liberation Sans">-200</text><text transform="translate(13.5 322) rotate(-90)" text-anchor="end" fill="#dcdcdc" font-size="9" font-family="Liberation Sans">-100</text><text transform="translate(13.5 417) rotate(-90)" text-anchor="end" fill="#dcdcdc" font-size="9" font-family="Liberation Sans">0</text><text transform="translate(13.5 511) rotate(-90)" text-anchor="end" fill="#dcdcdc" font-size="9" font-family="Liberation Sans">100</text><text transform="translate(13.5 606) rotate(-90)" text-anchor="end" fill="#dcdcdc" font-size="9" font-family="Liberation Sans">200</text><text transform="translate(13.5 700) rotate(-90)" text-anchor="end" fill="#dcdcdc" font-size="9" font-family="Liberation Sans">300</text><text transform="translate(13.5 795) rotate(-90)" text-anchor="end" fill="#dcdcdc" font-size="9" font-family="Liberation Sans">400</text><path d="M14 0.5 L18 0.5 L14 6 Z" fill="#f0f0f0"/></g></svg>
<div class="a" style="left:36px;top:90px;width:19px;height:20px;border-radius:5px;background:#333;border:1px solid #1c1c1c"></div>
<svg style="left:39px;top:93px" width="13" height="14" viewBox="0 0 13 14"><path d="M3 6.5 V4.5 Q3 1 6.5 1 Q10 1 10 4.5 V6.5" fill="none" stroke="#eaeaea" stroke-width="1.8"/><rect x="2" y="6" width="9" height="7" fill="#eaeaea"/></svg>
<!-- scroll areas -->
<div class="a" style="left:982px;top:90px;width:38px;height:919px;background:#2d2d2d"></div>
<div class="a" style="left:36px;top:991px;width:946px;height:18px;background:#2d2d2d"></div>


<!-- page -->
<div class="a" style="left:478px;top:527px;width:85px;height:51px;background:#8a8a8a;filter:blur(1.5px)"></div>
<div class="a" style="left:477px;top:525px;width:84px;height:51px;background:#ffffff;box-shadow:0 0 1px #999"></div>
<!-- scrollbars -->
<div class="a" style="left:991px;top:115px;width:8px;height:873px;border-radius:4px;background:#a5a5a5"></div>
<div class="a" style="left:38px;top:996px;width:941px;height:8px;border-radius:4px;background:#a5a5a5"></div>
<div class="a" style="left:1008px;top:90px;width:12px;height:919px;background:#363636"></div>
<div class="a" style="left:1012.5px;top:543px;width:3px;height:3px;border-radius:50%;background:#f0f0f0"></div>
<div class="a" style="left:1012.5px;top:547.5px;width:3px;height:3px;border-radius:50%;background:#f0f0f0"></div>
<div class="a" style="left:1012.5px;top:552px;width:3px;height:3px;border-radius:50%;background:#f0f0f0"></div>
<div class="a" style="left:983px;top:90px;width:24px;height:22px;border-radius:5px;background:#2f2f2f;border:1px solid #1c1c1c"></div>
<svg style="left:987px;top:94px" width="16" height="14" viewBox="0 0 16 14"><rect x="1.5" y="1" width="13" height="9" rx="1" fill="none" stroke="#f0f0f0" stroke-width="1.3"/><rect x="6.5" y="10" width="3" height="2" fill="#f0f0f0"/><rect x="4" y="12" width="8" height="1.3" fill="#f0f0f0"/></svg>
<div class="a" style="left:983px;top:991px;width:24px;height:18px;border-radius:5px;background:#2f2f2f;border:1px solid #1c1c1c"></div>
<svg style="left:987px;top:991px" width="16" height="17" viewBox="0 0 16 17"><circle cx="8" cy="5.4" r="3.1" fill="#2f2f2f" stroke="#e6e6e6" stroke-width="1"/><circle cx="4" cy="12.8" r="3.6" fill="#e6e6e6"/><circle cx="12" cy="12.8" r="3.6" fill="#e6e6e6"/><circle cx="4" cy="12.8" r="2.4" fill="#0a8a0a"/><circle cx="12" cy="12.8" r="2.4" fill="#e5178a"/></svg>

<!-- dock -->
<div class="a" style="left:1020px;top:90px;width:851px;height:919px;background:#353535"></div>
<div class="a" style="left:1020px;top:95px;width:851px;height:909px;background:#2b2b2b"></div>
<!-- dock tab bar -->
<div class="a" style="left:1020px;top:95px;width:851px;height:36px;background:#262626"></div>
<div class="a" style="left:1695px;top:95px;width:133px;height:36px;background:#2c2c2c"></div>
<div class="a" style="left:1695px;top:128px;width:133px;height:4px;background:#1d5ba8"></div>
<div class="a" style="left:1020px;top:131px;width:851px;height:1px;background:#1c1c1c"></div>
<div class="a" style="left:1840px;top:97px;width:30px;height:31px;border-radius:5px;background:#2a2a2a"></div>
<svg style="left:1848px;top:107px" width="14" height="10" viewBox="0 0 14 10"><path d="M1 2 L7 8 L13 2" fill="none" stroke="#8a8a8a" stroke-width="1.6"/></svg>
<!-- tabs -->
<svg style="left:1041px;top:104px" width="17" height="17" viewBox="0 0 17 17"><path d="M3 1.5 H14 L12 4.5 H1 Z" fill="#1da0f2"/><path d="M4 6.5 H15 L13 9.5 H2 Z" fill="#8fd0f8"/><path d="M5 11.5 H16 L14 14.5 H3 Z" fill="#f0f0f0"/></svg>
<div class="t" style="left:1058.9px;top:106px;color:#eaeaea;transform:scaleX(0.962);transform-origin:0 0;--tw:110.60">レイヤーとオブジェクト(S)</div>
<svg style="left:1174px;top:108px" width="9" height="9" viewBox="0 0 9 9"><path d="M1 1 L8 8 M8 1 L1 8" stroke="#a0a0a0" stroke-width="1.8"/></svg>
<svg style="left:1221px;top:104px" width="17" height="17" viewBox="0 0 17 17"><path d="M0.5 12 V0.5 H12" fill="none" stroke="#f0f0f0" stroke-width="1"/><path d="M16 2 L6.5 11 L5 9.5 Z" fill="#f0f0f0"/><path d="M5 10 Q2 10 2 13 Q2.5 16 0.8 16 Q4.5 16.5 6 12 Z" fill="#1da0f2"/></svg>
<div class="t" style="left:1238.2px;top:106px;color:#eaeaea;transform:scaleX(0.970);transform-origin:0 0;--tw:87.30">フィル/ストローク(F)</div>
<svg style="left:1331px;top:108px" width="9" height="9" viewBox="0 0 9 9"><path d="M1 1 L8 8 M8 1 L1 8" stroke="#a0a0a0" stroke-width="1.8"/></svg>
<svg style="left:1378px;top:104px" width="17" height="17" viewBox="0 0 17 17"><path d="M1.5 1 H7.5 L11 4.5 V15.5 H1.5 Z" fill="none" stroke="#f0f0f0" stroke-width="1.6"/><path d="M7 1 V5 H11" fill="none" stroke="#f0f0f0" stroke-width="1.4"/><path d="M6 11 H13" stroke="#11a011" stroke-width="1.8"/><path d="M12 8 L16 11 L12 14 Z" fill="#11a011"/></svg>
<div class="t" style="left:1395.8px;top:106px;color:#eaeaea;transform:scaleX(0.959);transform-origin:0 0;--tw:67.10">エクスポート(E)</div>
<svg style="left:1468px;top:108px" width="9" height="9" viewBox="0 0 9 9"><path d="M1 1 L8 8 M8 1 L1 8" stroke="#a0a0a0" stroke-width="1.8"/></svg>
<svg style="left:1514px;top:104px" width="18" height="17" viewBox="0 0 18 17"><path d="M4.5 14.5 L10.5 8.5" stroke="#20a020" stroke-width="2.6" stroke-linecap="round"/><path d="M9.2 8.3 Q7.8 4.3 10.8 2.2 Q12.8 1 14.8 1.8 L12.3 4.3 L13.6 5.6 L16.1 3.1 Q17 5.4 15.6 7.2 Q13.3 9.8 9.8 8.9 Z" fill="#20a020"/><rect x="0.5" y="10.5" width="5.5" height="6" fill="#f0f0f0"/></svg>
<div class="t" style="left:1533.0px;top:106px;color:#eaeaea;transform:scaleX(0.974);transform-origin:0 0;--tw:121.80">オブジェクトのプロパティ(O)</div>
<svg style="left:1661px;top:108px" width="9" height="9" viewBox="0 0 9 9"><path d="M1 1 L8 8 M8 1 L1 8" stroke="#a0a0a0" stroke-width="1.8"/></svg>
<svg style="left:1708px;top:104px" width="17" height="17" viewBox="0 0 17 17"><rect x="0.5" y="1" width="1.2" height="14" fill="#11a011"/><rect x="3" y="1" width="8" height="3" fill="#f0f0f0"/><rect x="3" y="6" width="10" height="3" fill="#f0f0f0"/><rect x="3" y="11" width="6" height="3" fill="#f0f0f0"/></svg>
<div class="t" style="left:1724.5px;top:106px;color:#eaeaea;transform:scaleX(1.205);transform-origin:0 0;--tw:73.50">整列と配置(A)</div>
<svg style="left:1804px;top:108px" width="9" height="9" viewBox="0 0 9 9"><path d="M1 1 L8 8 M8 1 L1 8" stroke="#a0a0a0" stroke-width="1.8"/></svg>
<!-- inner notebook -->
<div class="a" style="left:1021px;top:134px;width:848px;height:443px;border:1px solid #1e1e1e;background:#2b2b2b"></div>
<div class="a" style="left:1022px;top:135px;width:846px;height:26px;background:#282828"></div>
<div class="a" style="left:1022px;top:161px;width:846px;height:1px;background:#1e1e1e"></div>
<div class="a" style="left:1029px;top:159px;width:58px;height:4px;background:#1d5ba8"></div>
<svg style="left:1040px;top:141px" width="14" height="14" viewBox="0 0 14 14"><rect x="0" y="0.5" width="1" height="13" fill="#11a011"/><rect x="3" y="1" width="6" height="3" fill="#f0f0f0"/><rect x="3" y="5.5" width="8" height="3" fill="#f0f0f0"/><rect x="3" y="10" width="6" height="3" fill="#f0f0f0"/></svg>
<div class="t" style="left:1055.2px;top:141px;color:#eaeaea;transform:scaleX(1.394);transform-origin:0 0;--tw:25.10">整列</div>
<svg style="left:1104px;top:141px" width="13" height="13" viewBox="0 0 13 13"><path d="M0 0H13V13H0Z M3.5 0V13 M6.5 0V13 M9.5 0V13 M0 3.5H13 M0 6.5H13 M0 9.5H13" fill="#f0f0f0" stroke="#888" stroke-width="0.8"/></svg>
<div class="t" style="left:1121.5px;top:141px;color:#eaeaea;transform:scaleX(0.961);transform-origin:0 0;--tw:34.60">グリッド</div>
<svg style="left:1178px;top:141px" width="14" height="14" viewBox="0 0 14 14"><circle cx="7" cy="7" r="4.8" fill="none" stroke="#f0f0f0" stroke-width="2.8" stroke-dasharray="2.6 1.2"/></svg>
<div class="t" style="left:1197.3px;top:141px;color:#eaeaea;transform:scaleX(1.311);transform-origin:0 0;--tw:11.80">円</div>


<!-- align panel content -->
<div class="t" style="left:1025.9px;top:166px;color:#eaeaea;transform:scaleX(1.350);transform-origin:0 0;--tw:24.30">整列</div>
<svg style="left:1046px;top:191px" width="18" height="18" viewBox="1046 191 18 18"><rect x="1048.8" y="193.8" width="12.4" height="12.4" rx="1" fill="none" stroke="#11a011" stroke-width="1.5" stroke-dasharray="2 1.1"/><rect x="1050.2" y="195.2" width="9.6" height="9.6" fill="#1e1e1e"/><rect x="1051" y="196" width="8" height="8" fill="#ececec"/></svg>
<div class="t" style="left:1075.7px;top:193px;color:#eaeaea;transform:scaleX(1.078);transform-origin:0 0;--tw:156.30">3 回目のクリックでハンドルを整列</div>
<svg style="left:1046px;top:225px" width="18" height="18" viewBox="1046 225 18 18"><rect x="1048" y="227" width="2" height="2" fill="#11a011"/><rect x="1060" y="227" width="2" height="2" fill="#11a011"/><rect x="1048" y="239" width="2" height="2" fill="#11a011"/><rect x="1060" y="239" width="2" height="2" fill="#11a011"/><rect x="1049.3" y="228.3" width="8.4" height="3.6" fill="#1e1e1e"/><rect x="1050" y="229" width="7" height="2.2" fill="#f0f0f0"/><rect x="1053.3" y="232.3" width="7.4" height="3.6" fill="#1e1e1e"/><rect x="1054" y="233" width="6" height="2.2" fill="#f0f0f0"/><rect x="1050.3" y="236.3" width="8.4" height="3.6" fill="#1e1e1e"/><rect x="1051" y="237" width="7" height="2.2" fill="#f0f0f0"/></svg>
<div class="t" style="left:1075.5px;top:227px;color:#eaeaea;transform:scaleX(1.085);transform-origin:0 0;--tw:198.60">選択オブジェクトをグループとして移動/整列</div>
<div class="t" style="left:1037.9px;top:261px;color:#eaeaea;transform:scaleX(1.267);transform-origin:0 0;--tw:26.60">基準:</div>
<div class="inp" style="left:1070px;top:252px;width:111px;height:32px;background:#2e2e2e;border-color:#1c1c1c"></div>
<div class="t" style="left:1075.7px;top:261px;color:#eaeaea;transform:scaleX(1.063);transform-origin:0 0;--tw:28.70">ページ</div>
<svg style="left:1161px;top:264px" width="12" height="8" viewBox="0 0 12 8"><path d="M0.5 0.5 H11.5 L6 7 Z" fill="#f0f0f0"/></svg>
<svg style="left:1040px;top:286px" width="200" height="222" viewBox="1040 286 200 222"><rect x="1047.3" y="295.3" width="10.4" height="4.4" fill="#1e1e1e"/><rect x="1048" y="296" width="9" height="3" fill="#f0f0f0"/><rect x="1049.3" y="299.3" width="8.4" height="4.4" fill="#1e1e1e"/><rect x="1050" y="300" width="7" height="3" fill="#f0f0f0"/><rect x="1048.3" y="303.3" width="9.4" height="4.4" fill="#1e1e1e"/><rect x="1049" y="304" width="8" height="3" fill="#f0f0f0"/><rect x="1060.5" y="295.5" width="1.2" height="1.2" fill="#11a011"/><rect x="1083.3" y="295.3" width="10.4" height="4.4" fill="#1e1e1e"/><rect x="1084" y="296" width="9" height="3" fill="#f0f0f0"/><rect x="1083.3" y="299.3" width="8.4" height="4.4" fill="#1e1e1e"/><rect x="1084" y="300" width="7" height="3" fill="#f0f0f0"/><rect x="1083.3" y="303.3" width="9.4" height="4.4" fill="#1e1e1e"/><rect x="1084" y="304" width="8" height="3" fill="#f0f0f0"/><rect x="1116.3" y="295.3" width="6.4" height="4.4" fill="#1e1e1e"/><rect x="1117" y="296" width="5" height="3" fill="#f0f0f0"/><rect x="1118.3" y="299.3" width="4.4" height="4.4" fill="#1e1e1e"/><rect x="1119" y="300" width="3" height="3" fill="#f0f0f0"/><rect x="1116.3" y="303.3" width="6.4" height="4.4" fill="#1e1e1e"/><rect x="1117" y="304" width="5" height="3" fill="#f0f0f0"/><rect x="1124.3" y="295.3" width="6.4" height="4.4" fill="#1e1e1e"/><rect x="1125" y="296" width="5" height="3" fill="#f0f0f0"/><rect x="1124.3" y="299.3" width="4.4" height="4.4" fill="#1e1e1e"/><rect x="1125" y="300" width="3" height="3" fill="#f0f0f0"/><rect x="1124.3" y="303.3" width="6.4" height="4.4" fill="#1e1e1e"/><rect x="1125" y="304" width="5" height="3" fill="#f0f0f0"/><rect x="1152.3" y="295.3" width="10.4" height="4.4" fill="#1e1e1e"/><rect x="1153" y="296" width="9" height="3" fill="#f0f0f0"/><rect x="1154.3" y="299.3" width="8.4" height="4.4" fill="#1e1e1e"/><rect x="1155" y="300" width="7" height="3" fill="#f0f0f0"/><rect x="1153.3" y="303.3" width="9.4" height="4.4" fill="#1e1e1e"/><rect x="1154" y="304" width="8" height="3" fill="#f0f0f0"/><rect x="1184.5" y="295.5" width="1.2" height="1.2" fill="#11a011"/><rect x="1188.3" y="295.3" width="10.4" height="4.4" fill="#1e1e1e"/><rect x="1189" y="296" width="9" height="3" fill="#f0f0f0"/><rect x="1188.3" y="299.3" width="9.4" height="4.4" fill="#1e1e1e"/><rect x="1189" y="300" width="8" height="3" fill="#f0f0f0"/><rect x="1188.3" y="303.3" width="9.4" height="4.4" fill="#1e1e1e"/><rect x="1189" y="304" width="8" height="3" fill="#f0f0f0"/><text x="1221" y="301" font-family="Liberation Sans" font-weight="bold" font-size="8" fill="#f0f0f0">a</text><text x="1219" y="308" font-family="Liberation Serif" font-style="italic" font-size="10" fill="#f0f0f0">y</text><rect x="1060.5" y="341.5" width="1.2" height="1.2" fill="#11a011"/><rect x="1049.3" y="329.3" width="4.4" height="9.4" fill="#1e1e1e"/><rect x="1050" y="330" width="3" height="8" fill="#f0f0f0"/><rect x="1053.3" y="331.3" width="4.4" height="7.4" fill="#1e1e1e"/><rect x="1054" y="332" width="3" height="6" fill="#f0f0f0"/><rect x="1057.3" y="328.3" width="4.4" height="10.4" fill="#1e1e1e"/><rect x="1058" y="329" width="3" height="9" fill="#f0f0f0"/><rect x="1083.3" y="330.3" width="4.4" height="9.4" fill="#1e1e1e"/><rect x="1084" y="331" width="3" height="8" fill="#f0f0f0"/><rect x="1087.3" y="330.3" width="4.4" height="8.4" fill="#1e1e1e"/><rect x="1088" y="331" width="3" height="7" fill="#f0f0f0"/><rect x="1091.3" y="330.3" width="4.4" height="10.4" fill="#1e1e1e"/><rect x="1092" y="331" width="3" height="9" fill="#f0f0f0"/><rect x="1117.3" y="329.3" width="4.4" height="6.4" fill="#1e1e1e"/><rect x="1118" y="330" width="3" height="5" fill="#f0f0f0"/><rect x="1121.3" y="331.3" width="4.4" height="4.4" fill="#1e1e1e"/><rect x="1122" y="332" width="3" height="3" fill="#f0f0f0"/><rect x="1125.3" y="329.3" width="4.4" height="6.4" fill="#1e1e1e"/><rect x="1126" y="330" width="3" height="5" fill="#f0f0f0"/><rect x="1117.3" y="337.3" width="4.4" height="6.4" fill="#1e1e1e"/><rect x="1118" y="338" width="3" height="5" fill="#f0f0f0"/><rect x="1121.3" y="337.3" width="4.4" height="4.4" fill="#1e1e1e"/><rect x="1122" y="338" width="3" height="3" fill="#f0f0f0"/><rect x="1125.3" y="337.3" width="4.4" height="6.4" fill="#1e1e1e"/><rect x="1126" y="338" width="3" height="5" fill="#f0f0f0"/><rect x="1150.3" y="331.3" width="4.4" height="11.4" fill="#1e1e1e"/><rect x="1151" y="332" width="3" height="10" fill="#f0f0f0"/><rect x="1154.3" y="332.3" width="4.4" height="10.4" fill="#1e1e1e"/><rect x="1155" y="333" width="3" height="9" fill="#f0f0f0"/><rect x="1158.3" y="332.3" width="4.4" height="10.4" fill="#1e1e1e"/><rect x="1159" y="333" width="3" height="9" fill="#f0f0f0"/><rect x="1196.5" y="329.5" width="1.2" height="1.2" fill="#11a011"/><rect x="1185.3" y="333.3" width="4.4" height="9.4" fill="#1e1e1e"/><rect x="1186" y="334" width="3" height="8" fill="#f0f0f0"/><rect x="1189.3" y="333.3" width="4.4" height="8.4" fill="#1e1e1e"/><rect x="1190" y="334" width="3" height="7" fill="#f0f0f0"/><rect x="1193.3" y="333.3" width="4.4" height="10.4" fill="#1e1e1e"/><rect x="1194" y="334" width="3" height="9" fill="#f0f0f0"/><text x="1218" y="338" font-family="Liberation Serif" font-style="italic" font-weight="bold" font-size="9" fill="#f0f0f0">y</text><text x="1224" y="337" font-family="Liberation Sans" font-weight="bold" font-size="8" fill="#f0f0f0">a</text><rect x="1048.3" y="396.3" width="6.4" height="10.4" fill="#1e1e1e"/><rect x="1049" y="397" width="5" height="9" fill="#f0f0f0"/><rect x="1055.3" y="396.3" width="6.4" height="7.4" fill="#1e1e1e"/><rect x="1056" y="397" width="5" height="6" fill="#f0f0f0"/><rect x="1082.3" y="396.3" width="6.4" height="10.4" fill="#1e1e1e"/><rect x="1083" y="397" width="5" height="9" fill="#f0f0f0"/><rect x="1089.3" y="396.3" width="6.4" height="7.4" fill="#1e1e1e"/><rect x="1090" y="397" width="5" height="6" fill="#f0f0f0"/><rect x="1116.3" y="396.3" width="6.4" height="7.4" fill="#1e1e1e"/><rect x="1117" y="397" width="5" height="6" fill="#f0f0f0"/><rect x="1123.3" y="396.3" width="6.4" height="10.4" fill="#1e1e1e"/><rect x="1124" y="397" width="5" height="9" fill="#f0f0f0"/><rect x="1148.3" y="396.3" width="4.4" height="9.4" fill="#1e1e1e"/><rect x="1149" y="397" width="3" height="8" fill="#f0f0f0"/><rect x="1154.3" y="396.3" width="5.4" height="7.4" fill="#1e1e1e"/><rect x="1155" y="397" width="4" height="6" fill="#f0f0f0"/><rect x="1161.3" y="396.3" width="4.4" height="10.4" fill="#1e1e1e"/><rect x="1162" y="397" width="3" height="9" fill="#f0f0f0"/><text x="1184.5" y="402.5" font-family="Liberation Sans" font-weight="bold" font-size="8" fill="#f0f0f0">a</text><text x="1190" y="403" font-family="Liberation Serif" font-style="italic" font-size="11" fill="#f0f0f0">y</text><rect x="1052.3" y="426.3" width="10.4" height="6.4" fill="#1e1e1e"/><rect x="1053" y="427" width="9" height="5" fill="#f0f0f0"/><rect x="1052.3" y="433.3" width="7.4" height="6.4" fill="#1e1e1e"/><rect x="1053" y="434" width="6" height="5" fill="#f0f0f0"/><rect x="1086.3" y="426.3" width="10.4" height="6.4" fill="#1e1e1e"/><rect x="1087" y="427" width="9" height="5" fill="#f0f0f0"/><rect x="1086.3" y="433.3" width="7.4" height="6.4" fill="#1e1e1e"/><rect x="1087" y="434" width="6" height="5" fill="#f0f0f0"/><rect x="1120.3" y="426.3" width="7.4" height="6.4" fill="#1e1e1e"/><rect x="1121" y="427" width="6" height="5" fill="#f0f0f0"/><rect x="1120.3" y="433.3" width="10.4" height="6.4" fill="#1e1e1e"/><rect x="1121" y="434" width="9" height="5" fill="#f0f0f0"/><rect x="1154.3" y="424.3" width="10.4" height="4.4" fill="#1e1e1e"/><rect x="1155" y="425" width="9" height="3" fill="#f0f0f0"/><rect x="1154.3" y="430.3" width="9.4" height="5.4" fill="#1e1e1e"/><rect x="1155" y="431" width="8" height="4" fill="#f0f0f0"/><rect x="1154.3" y="437.3" width="9.4" height="4.4" fill="#1e1e1e"/><rect x="1155" y="438" width="8" height="3" fill="#f0f0f0"/><text x="1191.5" y="430.5" font-family="Liberation Sans" font-weight="bold" font-size="8" fill="#f0f0f0">a</text><text x="1189" y="439" font-family="Liberation Serif" font-style="italic" font-size="11" fill="#f0f0f0">y</text><path d="M1049 493.5 L1052 489 L1058 490.5 L1057 496 L1060.5 500 L1055 502 L1052 497 Z M1052 497 L1049 493.5 M1052 497 L1057 496" fill="none" stroke="#d8d8d8" stroke-width="0.9"/><circle cx="1049" cy="493.5" r="1.3" fill="#f0f0f0"/><circle cx="1052" cy="489" r="1.3" fill="#f0f0f0"/><circle cx="1058" cy="490.5" r="1.3" fill="#f0f0f0"/><circle cx="1052" cy="497" r="1.3" fill="#f0f0f0"/><circle cx="1057" cy="496" r="1.3" fill="#f0f0f0"/><circle cx="1060.5" cy="500" r="1.3" fill="#f0f0f0"/><circle cx="1055" cy="502" r="1.3" fill="#f0f0f0"/><rect x="1082.3" y="488.3" width="6.4" height="6.4" fill="#1e1e1e"/><rect x="1083" y="489" width="5" height="5" fill="#f0f0f0"/><rect x="1090.3" y="496.3" width="6.4" height="6.4" fill="#1e1e1e"/><rect x="1091" y="497" width="5" height="5" fill="#f0f0f0"/><path d="M1089.5 491 Q1093.5 491 1094.0 495" fill="none" stroke="#f0f0f0" stroke-width="1"/><path d="M1092.0 494 L1094.0 496.5 L1096.0 494 Z" fill="#f0f0f0"/><path d="M1091.0 489 L1089.0 491 L1091.0 493 Z" fill="#f0f0f0"/><path d="M1084 495 L1089 499.5 L1086.5 499.8 L1085 502.5 Z" fill="#1da0f2"/><rect x="1116.3" y="488.3" width="6.4" height="6.4" fill="#1e1e1e"/><rect x="1117" y="489" width="5" height="5" fill="#f0f0f0"/><rect x="1126.3" y="496.3" width="6.4" height="6.4" fill="#1e1e1e"/><rect x="1127" y="497" width="5" height="5" fill="#f0f0f0"/><path d="M1123.5 491 Q1127.5 491 1128.0 495" fill="none" stroke="#f0f0f0" stroke-width="1"/><path d="M1126.0 494 L1128.0 496.5 L1130.0 494 Z" fill="#f0f0f0"/><path d="M1125.0 489 L1123.0 491 L1125.0 493 Z" fill="#f0f0f0"/><path d="M1118 495.5 H1123 M1116 499 H1123 M1118 502 H1123" stroke="#1da0f2" stroke-width="1"/><rect x="1150.3" y="488.3" width="6.4" height="6.4" fill="#1e1e1e"/><rect x="1151" y="489" width="5" height="5" fill="#f0f0f0"/><rect x="1158.3" y="496.3" width="6.4" height="6.4" fill="#1e1e1e"/><rect x="1159" y="497" width="5" height="5" fill="#f0f0f0"/><path d="M1157.5 491 Q1161.5 491 1162.0 495" fill="none" stroke="#f0f0f0" stroke-width="1"/><path d="M1160.0 494 L1162.0 496.5 L1164.0 494 Z" fill="#f0f0f0"/><path d="M1159.0 489 L1157.0 491 L1159.0 493 Z" fill="#f0f0f0"/><circle cx="1154" cy="499" r="3.3" fill="none" stroke="#1da0f2" stroke-width="0.9" stroke-dasharray="1.5 1"/><rect x="1184.3" y="488.3" width="5.4" height="4.4" fill="#1e1e1e"/><rect x="1185" y="489" width="4" height="3" fill="#f0f0f0"/><rect x="1191.3" y="488.3" width="6.4" height="4.4" fill="#1e1e1e"/><rect x="1192" y="489" width="5" height="3" fill="#f0f0f0"/><rect x="1183.3" y="493.3" width="5.4" height="4.4" fill="#1e1e1e"/><rect x="1184" y="494" width="4" height="3" fill="#f0f0f0"/><rect x="1188.3" y="494.3" width="5.4" height="4.4" fill="#1e1e1e"/><rect x="1189" y="495" width="4" height="3" fill="#f0f0f0"/><rect x="1194.3" y="492.3" width="4.4" height="4.4" fill="#1e1e1e"/><rect x="1195" y="493" width="3" height="3" fill="#f0f0f0"/><rect x="1183.3" y="497.3" width="5.4" height="4.4" fill="#1e1e1e"/><rect x="1184" y="498" width="4" height="3" fill="#f0f0f0"/><rect x="1194.3" y="498.3" width="4.4" height="4.4" fill="#1e1e1e"/><rect x="1195" y="499" width="3" height="3" fill="#f0f0f0"/><rect x="1188.3" y="500.3" width="5.4" height="4.4" fill="#1e1e1e"/><rect x="1189" y="501" width="4" height="3" fill="#f0f0f0"/><path d="M1222 496 L1228 490.5 M1222 497.5 L1228 501.5 M1230 494 V498" stroke="#d8d8d8" stroke-width="0.9" stroke-dasharray="1.6 1.2"/><rect x="1217.3" y="494.3" width="5.4" height="5.4" fill="#1e1e1e"/><rect x="1218" y="495" width="4" height="4" fill="#f0f0f0"/><rect x="1227.3" y="487.8" width="5.4" height="4.4" fill="#1e1e1e"/><rect x="1228" y="488.5" width="4" height="3" fill="#f0f0f0"/><rect x="1227.3" y="499.3" width="5.4" height="4.4" fill="#1e1e1e"/><rect x="1228" y="500" width="4" height="3" fill="#f0f0f0"/><path d="M1058.5 294 L1058.5 310" stroke="#11a011" stroke-width="1"/><path d="M1082.5 294 L1082.5 310" stroke="#11a011" stroke-width="1"/><path d="M1123.5 294 L1123.5 310" stroke="#11a011" stroke-width="1"/><path d="M1163.5 294 L1163.5 310" stroke="#11a011" stroke-width="1"/><path d="M1187.5 294 L1187.5 310" stroke="#11a011" stroke-width="1"/><path d="M1220.5 294 L1220.5 310" stroke="#11a011" stroke-width="1"/><path d="M1047 339.5 L1063 339.5" stroke="#11a011" stroke-width="1"/><path d="M1081 329.5 L1097 329.5" stroke="#11a011" stroke-width="1"/><path d="M1115 336.5 L1131 336.5" stroke="#11a011" stroke-width="1"/><path d="M1149 342.5 L1165 342.5" stroke="#11a011" stroke-width="1"/><path d="M1183 332.5 L1199 332.5" stroke="#11a011" stroke-width="1"/><path d="M1217 338.5 L1233 338.5" stroke="#11a011" stroke-width="1"/><path d="M1049.5 391 L1049.5 396" stroke="#11a011" stroke-width="1"/><path d="M1056.5 391 L1056.5 396" stroke="#11a011" stroke-width="1"/><path d="M1085.5 391 L1085.5 396" stroke="#11a011" stroke-width="1"/><path d="M1092.5 391 L1092.5 396" stroke="#11a011" stroke-width="1"/><path d="M1121.5 391 L1121.5 396" stroke="#11a011" stroke-width="1"/><path d="M1128.5 391 L1128.5 396" stroke="#11a011" stroke-width="1"/><path d="M1151 393.5 H1156 M1151 392 V395 M1156 392 V395 M1158 393.5 H1163 M1158 392 V395 M1163 392 V395" stroke="#11a011" stroke-width="1"/><path d="M1184 393.5 H1192 M1184 392 V395 M1192 392 V395" stroke="#11a011" stroke-width="1"/><path d="M1047 427.5 L1052 427.5" stroke="#11a011" stroke-width="1"/><path d="M1047 434.5 L1052 434.5" stroke="#11a011" stroke-width="1"/><path d="M1081 429.5 L1086 429.5" stroke="#11a011" stroke-width="1"/><path d="M1081 436.5 L1086 436.5" stroke="#11a011" stroke-width="1"/><path d="M1115 431.5 L1120 431.5" stroke="#11a011" stroke-width="1"/><path d="M1115 438.5 L1120 438.5" stroke="#11a011" stroke-width="1"/><path d="M1151 427 V431 M1150 427.5 H1152 M1150 430.5 H1152 M1151 434 V438 M1150 434.5 H1152 M1150 437.5 H1152" stroke="#11a011" stroke-width="1"/><path d="M1185.5 431 V439 M1183 431 H1190 M1183 439 H1188" stroke="#11a011" stroke-width="1"/></svg>
<div class="t" style="left:1025.9px;top:365px;color:#eaeaea;transform:scaleX(1.350);transform-origin:0 0;--tw:24.30">配置</div>
<div class="t" style="left:1025.9px;top:462px;color:#eaeaea;transform:scaleX(1.348);transform-origin:0 0;--tw:36.40">再配置</div>
<div class="t" style="left:1025.9px;top:525px;color:#eaeaea;transform:scaleX(1.185);transform-origin:0 0;--tw:64.00">重なりを除去</div>
<div class="t" style="left:1037.9px;top:552px;color:#eaeaea;transform:scaleX(1.076);transform-origin:0 0;--tw:22.60">高さ:</div>
<div class="inp" style="left:1061px;top:542px;width:88px;height:33px;background:#2d2d2d;border-color:#1c1c1c"><div class="d" style="left:37px;background:#262626"></div><div class="d" style="left:62px;background:#262626"></div></div>
<div class="t" style="left:1067.3px;top:552px;color:#eaeaea;transform:scaleX(0.986);transform-origin:0 0;--tw:6.90">0</div>
<div class="a" style="left:1104px;top:558px;width:13px;height:2px;background:#f0f0f0"></div>
<div class="a" style="left:1129px;top:558px;width:13px;height:2px;background:#f0f0f0"></div><div class="a" style="left:1134.5px;top:552.5px;width:2px;height:13px;background:#f0f0f0"></div>
<div class="t" style="left:1152.3px;top:552px;color:#eaeaea;transform:scaleX(0.973);transform-origin:0 0;--tw:10.70">V:</div>
<div class="inp" style="left:1163px;top:542px;width:88px;height:33px;background:#2d2d2d;border-color:#1c1c1c"><div class="d" style="left:37px;background:#262626"></div><div class="d" style="left:62px;background:#262626"></div></div>
<div class="t" style="left:1168.9px;top:552px;color:#eaeaea;transform:scaleX(1.086);transform-origin:0 0;--tw:7.60">0</div>
<div class="a" style="left:1206px;top:558px;width:13px;height:2px;background:#f0f0f0"></div>
<div class="a" style="left:1231px;top:558px;width:13px;height:2px;background:#f0f0f0"></div><div class="a" style="left:1236.5px;top:552.5px;width:2px;height:13px;background:#f0f0f0"></div>
<svg style="left:1265px;top:551px" width="15" height="16" viewBox="0 0 15 16"><rect x="1" y="1" width="2.6" height="2.6" fill="#f0f0f0"/><rect x="1" y="5" width="2.6" height="10" fill="#f0f0f0"/><rect x="6" y="1" width="2.6" height="14" fill="#f0f0f0"/><rect x="11" y="1" width="2.6" height="14" fill="#f0f0f0"/></svg>

<!-- right command bar -->
<div class="a" style="left:1871px;top:90px;width:49px;height:919px;background:#353535"></div>

<!-- command bar icons -->
<svg style="left:1890px;top:103px" width="16" height="16" viewBox="0 0 16 16"><path d="M2.5 2 H8.5 L12 5.5 V14.5 H2.5 Z" fill="none" stroke="#f0f0f0" stroke-width="1.7"/><path d="M8 2 V6 H12" fill="none" stroke="#f0f0f0" stroke-width="1.3"/><path d="M13 0 L13.8 1.8 L15.8 2 L14.3 3.2 L14.8 5.2 L13 4.1 L11.2 5.2 L11.7 3.2 L10.2 2 L12.2 1.8 Z" fill="#11a011"/></svg>
<svg style="left:1890px;top:138px" width="16" height="16" viewBox="0 0 16 16"><path d="M1.5 3 H6 L7.5 4.5 H12.5 V6.5" fill="none" stroke="#f0f0f0" stroke-width="1.5"/><path d="M1.5 3 V14" stroke="#f0f0f0" stroke-width="1.5"/><path d="M3.5 7 H15.5 L13.5 14 H1.5 Z" fill="#f0f0f0"/></svg>
<svg style="left:1890px;top:176px" width="16" height="16" viewBox="0 0 16 16"><path d="M8 0 V7" stroke="#11a011" stroke-width="2"/><path d="M4.5 5 L8 9 L11.5 5 Z" fill="#11a011"/><path d="M1 10 H4.5 V12 H11.5 V10 H15 V15 H1 Z" fill="#f0f0f0"/><path d="M1 10 L3 7.5 M15 10 L13 7.5" stroke="#f0f0f0" stroke-width="1.3"/></svg>
<svg style="left:1890px;top:207px" width="16" height="16" viewBox="0 0 16 16"><rect x="4" y="1" width="8" height="4" fill="#f0f0f0"/><rect x="1" y="6" width="14" height="6" rx="1" fill="#f0f0f0"/><rect x="4" y="10" width="8" height="5" fill="#f0f0f0" stroke="#353535" stroke-width="1"/></svg>
<div class="a" style="left:1880px;top:240px;width:35px;height:1px;background:#2c2c2c"></div>
<svg style="left:1890px;top:257px" width="16" height="16" viewBox="0 0 16 16"><path d="M5.5 5 V2 H10.5 L14 5.5 V14.5 H5.5 V11" fill="none" stroke="#f0f0f0" stroke-width="1.6"/><path d="M1 8 H8" stroke="#11a011" stroke-width="1.8"/><path d="M7 5 L11 8 L7 11 Z" fill="#11a011"/></svg>
<svg style="left:1890px;top:292px" width="16" height="16" viewBox="0 0 16 16"><path d="M11 7 V5 L7.5 1.5 H2 V14.5 H11 V12" fill="none" stroke="#f0f0f0" stroke-width="1.6"/><path d="M7 1.5 V5.5 H11" fill="none" stroke="#f0f0f0" stroke-width="1.3"/><path d="M6.5 9.5 H13" stroke="#11a011" stroke-width="1.8"/><path d="M12 6.3 L15.8 9.5 L12 12.7 Z" fill="#11a011"/></svg>
<div class="a" style="left:1880px;top:324px;width:35px;height:1px;background:#2c2c2c"></div>
<svg style="left:1890px;top:340px" width="16" height="16" viewBox="0 0 16 16"><path d="M4 6 H10 Q14 6 14 9.5 Q14 13 10 13 H8" fill="none" stroke="#6a6a6a" stroke-width="1.8"/><path d="M6 2.5 L2 6 L6 9.5 Z" fill="#6a6a6a"/></svg>
<svg style="left:1890px;top:376px" width="16" height="16" viewBox="0 0 16 16"><path d="M12 6 H6 Q2 6 2 9.5 Q2 13 6 13 H8" fill="none" stroke="#6a6a6a" stroke-width="1.8"/><path d="M10 2.5 L14 6 L10 9.5 Z" fill="#6a6a6a"/></svg>
<div class="a" style="left:1880px;top:409px;width:35px;height:1px;background:#2c2c2c"></div>
<svg style="left:1890px;top:426px" width="16" height="16" viewBox="0 0 16 16"><rect x="1" y="1" width="9" height="9" fill="#f0f0f0"/><rect x="5" y="5" width="10" height="10" fill="#f0f0f0" stroke="#353535" stroke-width="1"/></svg>
<svg style="left:1890px;top:460px" width="16" height="16" viewBox="0 0 16 16"><circle cx="4" cy="12" r="2.5" fill="none" stroke="#f0f0f0" stroke-width="1.6"/><circle cx="12" cy="12" r="2.5" fill="none" stroke="#f0f0f0" stroke-width="1.6"/><path d="M5.5 10 L12 1 M10.5 10 L4 1" stroke="#f0f0f0" stroke-width="1.6"/></svg>
<svg style="left:1890px;top:494px" width="16" height="16" viewBox="0 0 16 16"><path d="M2.5 3 H13.5 V15 H2.5 Z" fill="none" stroke="#f0f0f0" stroke-width="1.5"/><rect x="5" y="1" width="6" height="3.5" fill="#f0f0f0"/><rect x="4.5" y="6" width="7" height="7" fill="#f0f0f0"/></svg>
<div class="a" style="left:1880px;top:527px;width:36px;height:1px;background:#2c2c2c"></div>
<svg style="left:1890px;top:543px" width="16" height="16" viewBox="0 0 16 16"><circle cx="7.2" cy="7" r="6.6" fill="#ececec"/><path d="M11 11 L14.5 14.5" stroke="#ececec" stroke-width="2.6" stroke-linecap="round"/><rect x="3.5" y="3.3" width="7.4" height="7.4" fill="none" stroke="#333" stroke-width="1.1" stroke-dasharray="1.1 1"/></svg>
<svg style="left:1890px;top:579px" width="16" height="16" viewBox="0 0 16 16"><circle cx="7.2" cy="7" r="6.6" fill="#ececec"/><path d="M11 11 L14.5 14.5" stroke="#ececec" stroke-width="2.6" stroke-linecap="round"/><circle cx="5.8" cy="5.6" r="2.9" fill="#333"/><rect x="6.4" y="6.2" width="5" height="5" fill="#333" stroke="#ececec" stroke-width="0.9"/></svg>
<svg style="left:1890px;top:614px" width="16" height="16" viewBox="0 0 16 16"><circle cx="7.2" cy="7" r="6.6" fill="#ececec"/><path d="M11 11 L14.5 14.5" stroke="#ececec" stroke-width="2.6" stroke-linecap="round"/><rect x="4.3" y="2.6" width="5.8" height="8.8" fill="#ececec" stroke="#333" stroke-width="1.2"/></svg>
<svg style="left:1890px;top:649px" width="16" height="16" viewBox="0 0 16 16"><path d="M1 3.5 V1 H3.5 M12.5 1 H15 V3.5 M15 12.5 V15 H12.5 M3.5 15 H1 V12.5" fill="none" stroke="#bdbdbd" stroke-width="1"/><rect x="3" y="3" width="10" height="10" fill="none" stroke="#ececec" stroke-width="1.3"/><path d="M8 5.3 V10.7 M5.3 8 H10.7" stroke="#ececec" stroke-width="1.3"/></svg>
<div class="a" style="left:1880px;top:681px;width:35px;height:1px;background:#2c2c2c"></div>
<svg style="left:1890px;top:698px" width="17" height="17" viewBox="0 0 17 17"><rect x="1" y="1" width="9" height="9" fill="#ececec"/><rect x="5.5" y="5.5" width="10.5" height="10.5" fill="#0a9a0a" stroke="#333" stroke-width="1.2"/></svg>
<svg style="left:1890px;top:732px" width="17" height="17" viewBox="0 0 17 17"><rect x="1" y="1" width="9" height="9" fill="#ececec"/><rect x="5.5" y="5.5" width="10.5" height="10.5" fill="#333" stroke="#ececec" stroke-width="1.3"/><rect x="8" y="10" width="5.5" height="4.2" fill="#ececec"/><path d="M9.2 10 V8.6 Q10.75 6.6 12.3 8.6 V10" fill="none" stroke="#ececec" stroke-width="1.1"/></svg>
<svg style="left:1890px;top:767px" width="17" height="17" viewBox="0 0 17 17"><rect x="1" y="1" width="9" height="9" fill="#ececec"/><rect x="5.5" y="5.5" width="10.5" height="10.5" fill="#333" stroke="#ececec" stroke-width="1.3"/><rect x="7.5" y="10" width="5.5" height="4.2" fill="#ececec"/><path d="M11.8 10 V8.6 Q13.2 6.6 14.5 8.6" fill="none" stroke="#ececec" stroke-width="1.1"/></svg>
<div class="a" style="left:1880px;top:799px;width:35px;height:1px;background:#2c2c2c"></div>
<svg style="left:1890px;top:815px" width="16" height="16" viewBox="0 0 16 16"><rect x="0.5" y="0.5" width="3" height="3" fill="#11a011"/><rect x="12.5" y="0.5" width="3" height="3" fill="#11a011"/><rect x="0.5" y="12.5" width="3" height="3" fill="#11a011"/><rect x="12.5" y="12.5" width="3" height="3" fill="#11a011"/><path d="M7 13 H12.5 V7.5 Z" fill="#ececec"/><circle cx="6.5" cy="6.8" r="3.6" fill="#ececec"/></svg>
<svg style="left:1890px;top:851px" width="16" height="16" viewBox="0 0 16 16"><rect x="1" y="1" width="2.2" height="2.2" fill="#ececec"/><rect x="12.8" y="1" width="2.2" height="2.2" fill="#ececec"/><rect x="1" y="12.8" width="2.2" height="2.2" fill="#ececec"/><rect x="12.8" y="12.8" width="2.2" height="2.2" fill="#ececec"/><rect x="6.5" y="1" width="2.2" height="2.2" fill="#ececec"/><rect x="6.5" y="12.8" width="2.2" height="2.2" fill="#ececec"/><path d="M7 13 H12.5 V7.5 Z" fill="#9a9a9a"/><circle cx="6.5" cy="6.8" r="3.6" fill="#ececec"/></svg>
<div class="a" style="left:1880px;top:884px;width:35px;height:1px;background:#2c2c2c"></div>
<svg style="left:1890px;top:900px" width="16" height="16" viewBox="0 0 16 16"><path d="M0.8 13 V1 H12" fill="none" stroke="#f0f0f0" stroke-width="1.3"/><path d="M15.5 3 L7 11 L5.5 9.5 Z" fill="#f0f0f0"/><path d="M5 10 Q2 10 2 13 Q2.5 15.5 0.8 15.8 Q5 16 6.5 12 Z" fill="#1da0f2"/></svg>
<div class="t" style="left:1891px;top:934px;font-family:'Liberation Serif';font-weight:bold;font-size:17px;line-height:18px;color:#f0f0f0">T</div>
<svg style="left:1892px;top:980px" width="10" height="14" viewBox="0 0 10 14"><path d="M2 1 L9 7 L2 13 Z" fill="#f0f0f0"/></svg>

<!-- palette row -->
<div class="a" style="left:0;top:1009px;width:1920px;height:36px;background:#353535"></div>

<!-- status bar -->
<div class="a" style="left:0;top:1045px;width:1920px;height:35px;background:#353535"></div>

<svg style="left:35px;top:1028px" width="1802" height="16" viewBox="0 0 1802 16"><rect x="0" y="0" width="16" height="16" fill="#000000"/><rect x="17" y="0" width="16" height="16" fill="#1a1a1a"/><rect x="34" y="0" width="16" height="16" fill="#333333"/><rect x="51" y="0" width="16" height="16" fill="#4d4d4d"/><rect x="68" y="0" width="16" height="16" fill="#666666"/><rect x="85" y="0" width="16" height="16" fill="#808080"/><rect x="102" y="0" width="16" height="16" fill="#999999"/><rect x="119" y="0" width="16" height="16" fill="#b3b3b3"/><rect x="136" y="0" width="16" height="16" fill="#cccccc"/><rect x="153" y="0" width="16" height="16" fill="#e6e6e6"/><rect x="170" y="0" width="16" height="16" fill="#ececec"/><rect x="187" y="0" width="16" height="16" fill="#f2f2f2"/><rect x="204" y="0" width="16" height="16" fill="#f9f9f9"/><rect x="221" y="0" width="16" height="16" fill="#ffffff"/><rect x="238" y="0" width="16" height="16" fill="#800000"/><rect x="255" y="0" width="16" height="16" fill="#ff0000"/><rect x="272" y="0" width="16" height="16" fill="#808000"/><rect x="289" y="0" width="16" height="16" fill="#ffff00"/><rect x="306" y="0" width="16" height="16" fill="#008000"/><rect x="323" y="0" width="16" height="16" fill="#00ff00"/><rect x="340" y="0" width="16" height="16" fill="#008080"/><rect x="357" y="0" width="16" height="16" fill="#00ffff"/><rect x="374" y="0" width="16" height="16" fill="#000080"/><rect x="391" y="0" width="16" height="16" fill="#0000ff"/><rect x="408" y="0" width="16" height="16" fill="#800080"/><rect x="425" y="0" width="16" height="16" fill="#ff00ff"/><rect x="442" y="0" width="16" height="16" fill="#2b0000"/><rect x="459" y="0" width="16" height="16" fill="#550000"/><rect x="476" y="0" width="16" height="16" fill="#800000"/><rect x="493" y="0" width="16" height="16" fill="#aa0000"/><rect x="510" y="0" width="16" height="16" fill="#d40000"/><rect x="527" y="0" width="16" height="16" fill="#ff0000"/><rect x="544" y="0" width="16" height="16" fill="#ff2a2a"/><rect x="561" y="0" width="16" height="16" fill="#ff5555"/><rect x="578" y="0" width="16" height="16" fill="#ff8080"/><rect x="595" y="0" width="16" height="16" fill="#ffaaaa"/><rect x="612" y="0" width="16" height="16" fill="#ffd5d5"/><rect x="629" y="0" width="16" height="16" fill="#280b0b"/><rect x="646" y="0" width="16" height="16" fill="#501616"/><rect x="663" y="0" width="16" height="16" fill="#782121"/><rect x="680" y="0" width="16" height="16" fill="#a02c2c"/><rect x="697" y="0" width="16" height="16" fill="#c83737"/><rect x="714" y="0" width="16" height="16" fill="#d35f5f"/><rect x="731" y="0" width="16" height="16" fill="#de8787"/><rect x="748" y="0" width="16" height="16" fill="#e9afaf"/><rect x="765" y="0" width="16" height="16" fill="#f4d7d7"/><rect x="782" y="0" width="16" height="16" fill="#241c1c"/><rect x="799" y="0" width="16" height="16" fill="#483737"/><rect x="816" y="0" width="16" height="16" fill="#6c5353"/><rect x="833" y="0" width="16" height="16" fill="#916f6f"/><rect x="850" y="0" width="16" height="16" fill="#ac9393"/><rect x="867" y="0" width="16" height="16" fill="#c8b7b7"/><rect x="884" y="0" width="16" height="16" fill="#e3dbdb"/><rect x="901" y="0" width="16" height="16" fill="#2b1100"/><rect x="918" y="0" width="16" height="16" fill="#552200"/><rect x="935" y="0" width="16" height="16" fill="#803300"/><rect x="952" y="0" width="16" height="16" fill="#aa4400"/><rect x="969" y="0" width="16" height="16" fill="#d45500"/><rect x="986" y="0" width="16" height="16" fill="#ff6600"/><rect x="1003" y="0" width="16" height="16" fill="#ff7f2a"/><rect x="1020" y="0" width="16" height="16" fill="#ff9955"/><rect x="1037" y="0" width="16" height="16" fill="#ffb380"/><rect x="1054" y="0" width="16" height="16" fill="#ffccaa"/><rect x="1071" y="0" width="16" height="16" fill="#ffe6d5"/><rect x="1088" y="0" width="16" height="16" fill="#28170b"/><rect x="1105" y="0" width="16" height="16" fill="#502d16"/><rect x="1122" y="0" width="16" height="16" fill="#784421"/><rect x="1139" y="0" width="16" height="16" fill="#a05a2c"/><rect x="1156" y="0" width="16" height="16" fill="#c87137"/><rect x="1173" y="0" width="16" height="16" fill="#d38d5f"/><rect x="1190" y="0" width="16" height="16" fill="#deaa87"/><rect x="1207" y="0" width="16" height="16" fill="#e9c6af"/><rect x="1224" y="0" width="16" height="16" fill="#f4e3d7"/><rect x="1241" y="0" width="16" height="16" fill="#241f1c"/><rect x="1258" y="0" width="16" height="16" fill="#483e37"/><rect x="1275" y="0" width="16" height="16" fill="#6c5d53"/><rect x="1292" y="0" width="16" height="16" fill="#917c6f"/><rect x="1309" y="0" width="16" height="16" fill="#ac9d93"/><rect x="1326" y="0" width="16" height="16" fill="#c8beb7"/><rect x="1343" y="0" width="16" height="16" fill="#e3dedb"/><rect x="1360" y="0" width="16" height="16" fill="#2b2200"/><rect x="1377" y="0" width="16" height="16" fill="#554400"/><rect x="1394" y="0" width="16" height="16" fill="#806600"/><rect x="1411" y="0" width="16" height="16" fill="#aa8800"/><rect x="1428" y="0" width="16" height="16" fill="#d4aa00"/><rect x="1445" y="0" width="16" height="16" fill="#ffcc00"/><rect x="1462" y="0" width="16" height="16" fill="#ffd42a"/><rect x="1479" y="0" width="16" height="16" fill="#ffdd55"/><rect x="1496" y="0" width="16" height="16" fill="#ffe680"/><rect x="1513" y="0" width="16" height="16" fill="#ffeeaa"/><rect x="1530" y="0" width="16" height="16" fill="#fff6d5"/><rect x="1547" y="0" width="16" height="16" fill="#28220b"/><rect x="1564" y="0" width="16" height="16" fill="#504416"/><rect x="1581" y="0" width="16" height="16" fill="#786721"/><rect x="1598" y="0" width="16" height="16" fill="#a0892c"/><rect x="1615" y="0" width="16" height="16" fill="#c8ab37"/><rect x="1632" y="0" width="16" height="16" fill="#d3bc5f"/><rect x="1649" y="0" width="16" height="16" fill="#decd87"/><rect x="1666" y="0" width="16" height="16" fill="#e9ddaf"/><rect x="1683" y="0" width="16" height="16" fill="#f4eed7"/><rect x="1700" y="0" width="16" height="16" fill="#24221c"/><rect x="1717" y="0" width="16" height="16" fill="#484537"/><rect x="1734" y="0" width="16" height="16" fill="#6c6753"/><rect x="1751" y="0" width="16" height="16" fill="#918a6f"/><rect x="1768" y="0" width="16" height="16" fill="#aca793"/><rect x="1785" y="0" width="16" height="16" fill="#c8c4b7"/></svg>
<div class="a" style="left:0px;top:1010px;width:35px;height:35px;background:#222"></div><svg style="left:1px;top:1011px" width="33" height="33" viewBox="0 0 33 33"><rect x="0" y="0" width="33" height="33" fill="#ffffff"/><path d="M3.2 3.2 L29.8 29.8 M29.8 3.2 L3.2 29.8" stroke="#c8162c" stroke-width="2.5" stroke-linecap="round"/></svg>
<svg style="left:1845px;top:1023px" width="14" height="9" viewBox="0 0 14 9"><path d="M1.5 7.5 L7 2 L12.5 7.5" fill="none" stroke="#f0f0f0" stroke-width="1.7"/></svg>
<svg style="left:1876px;top:1021px" width="14" height="9" viewBox="0 0 14 9"><path d="M1.5 1.5 L7 7 L12.5 1.5" fill="none" stroke="#f0f0f0" stroke-width="1.7"/></svg>
<div class="inp" style="left:1899px;top:1017px;width:19px;height:28px;background:#333;border-color:#1c1c1c"></div>
<svg style="left:1902px;top:1024px" width="14" height="14" viewBox="0 0 14 14"><path d="M0.5 1.5 H13.5 M0.5 6.5 H13.5 M0.5 11.5 H13.5" stroke="#f0f0f0" stroke-width="1.8"/></svg>
<!-- status -->
<div class="t" style="left:19.8px;top:1048px;color:#d6d6d6;transform:scaleX(0.937);transform-origin:0 0;--tw:28.10">フィル:</div>
<div class="t" style="left:1.5px;top:1065px;color:#d6d6d6;transform:scaleX(0.967);transform-origin:0 0;--tw:46.40">ストローク:</div>
<div class="t" style="left:67.9px;top:1048px;color:#d6d6d6;transform:scaleX(1.194);transform-origin:0 0;--tw:43.00">該当なし</div>
<div class="t" style="left:67.9px;top:1065px;color:#d6d6d6;transform:scaleX(1.194);transform-origin:0 0;--tw:43.00">該当なし</div>
<div class="t" style="left:157.3px;top:1056px;color:#d6d6d6;transform:scaleX(1.042);transform-origin:0 0;--tw:12.50">O:</div>
<div class="inp" style="left:172px;top:1046px;width:72px;height:36px;background:#313131;border-color:#1e1e1e"><div class="d" style="left:37px"></div><div class="d" style="left:54px"></div></div>
<div class="t" style="left:178.9px;top:1056px;color:#8a8a8a;transform:scaleX(0.886);transform-origin:0 0;--tw:18.60">100</div>
<div class="a" style="left:213px;top:1063px;width:10px;height:1.5px;background:#555"></div>
<div class="a" style="left:230px;top:1063px;width:10px;height:1.5px;background:#555"></div><div class="a" style="left:234.25px;top:1058px;width:1.5px;height:11px;background:#555"></div>
<div class="a" style="left:261px;top:1054px;width:3px;height:17px;background:#3a7ee0"></div>
<div class="t" style="left:270.0px;top:1056px;color:#e6e6e6;transform:scaleX(0.909);transform-origin:0 0;--tw:37.25">Layer 1</div>
<svg style="left:327px;top:1056px" width="16" height="14" viewBox="0 0 16 14"><path d="M1 7 Q8 -1 15 7 Q8 15 1 7 Z" fill="none" stroke="#f0f0f0" stroke-width="1.8"/><circle cx="8" cy="7.5" r="2.5" fill="#f0f0f0"/><path d="M3 3 L1.5 1.5 M8 2 V0 M13 3 L14.5 1.5" stroke="#f0f0f0" stroke-width="1.3"/></svg>
<svg style="left:365px;top:1055px" width="15" height="15" viewBox="0 0 15 15"><path d="M7 7 V4.5 Q7 1.5 10 1.5 Q13 1.5 13 4.5 V5.5" fill="none" stroke="#f0f0f0" stroke-width="2"/><rect x="1" y="7" width="10" height="7.5" fill="#f0f0f0"/></svg>
<div class="a" style="left:389px;top:1046px;width:1px;height:34px;background:#2d2d2d"></div>
<div class="t" style="left:397.0px;top:1056px;color:#eaeaea;transform:scaleX(1.058);transform-origin:0 0;--tw:291.00">Alt: パスをタッチして選択, オブジェクトを順に選択, 強制ドラッグ</div>
<div class="a" style="left:1617px;top:1046px;width:1px;height:34px;background:#2d2d2d"></div>
<div class="t" style="left:1627.5px;top:1048px;color:#d6d6d6;transform:scaleX(0.955);transform-origin:0 0;--tw:10.50">X:</div>
<div class="t" style="left:1627.5px;top:1065px;color:#d6d6d6;transform:scaleX(1.000);transform-origin:0 0;--tw:10.00">Y:</div>
<div class="t" style="left:1659.0px;top:1048px;color:#d6d6d6;transform:scaleX(0.887);transform-origin:0 0;--tw:27.50">76.20</div>
<div class="t" style="left:1648.2px;top:1065px;color:#d6d6d6;transform:scaleX(0.911);transform-origin:0 0;--tw:38.25">-438.15</div>
<div class="t" style="left:1695.5px;top:1056px;color:#d6d6d6;transform:scaleX(1.050);transform-origin:0 0;--tw:10.50">Z:</div>
<div class="inp" style="left:1706px;top:1046px;width:88px;height:36px;background:#2f2f2f;border-color:#1e1e1e"><div class="d" style="left:42px;background:#262626"></div><div class="d" style="left:63px;background:#262626"></div></div>
<div class="t" style="left:1716.5px;top:1056px;color:#e6e6e6;transform:scaleX(0.910);transform-origin:0 0;--tw:22.75">25%</div>
<div class="a" style="left:1754px;top:1062px;width:12px;height:2px;background:#f0f0f0"></div>
<div class="a" style="left:1775px;top:1062px;width:12px;height:2px;background:#f0f0f0"></div><div class="a" style="left:1780px;top:1057px;width:2px;height:12px;background:#f0f0f0"></div>
<div class="t" style="left:1803.9px;top:1056px;color:#d6d6d6;transform:scaleX(0.800);transform-origin:0 0;--tw:9.60">R:</div>
<div class="inp" style="left:1814px;top:1046px;width:94px;height:36px;background:#2f2f2f;border-color:#1e1e1e"><div class="d" style="left:49px;background:#262626"></div><div class="d" style="left:70px;background:#262626"></div></div>
<div class="t" style="left:1827.8px;top:1056px;color:#e6e6e6;transform:scaleX(0.886);transform-origin:0 0;--tw:25.70">0.00°</div>
<div class="a" style="left:1868px;top:1062px;width:12px;height:2px;background:#f0f0f0"></div>
<div class="a" style="left:1889px;top:1062px;width:12px;height:2px;background:#f0f0f0"></div><div class="a" style="left:1894px;top:1057px;width:2px;height:12px;background:#f0f0f0"></div>
<script>
(function(){var els=document.querySelectorAll('.t');for(var i=0;i<els.length;i++){var e=els[i];var tw=parseFloat(getComputedStyle(e).getPropertyValue('--tw'));if(!tw)continue;e.style.transform='none';var w=e.getBoundingClientRect().width;if(w>0){e.style.transform='scaleX('+(tw/w).toFixed(4)+')';}}})();
</script>
</body></html>
